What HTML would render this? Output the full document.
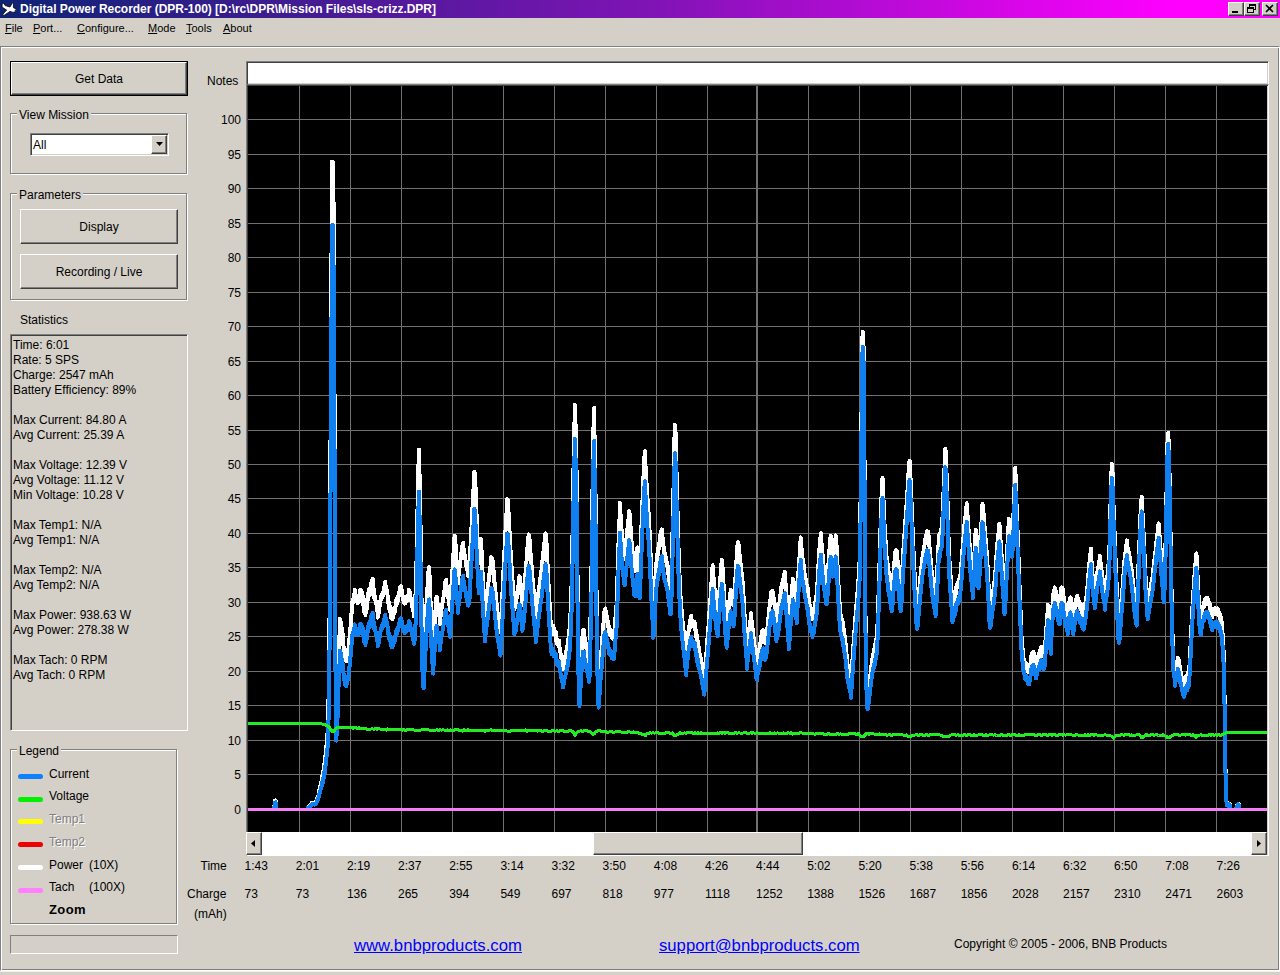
<!DOCTYPE html>
<html><head><meta charset="utf-8"><title>Digital Power Recorder (DPR-100)</title>
<style>
html,body{margin:0;padding:0}
body{width:1280px;height:975px;background:#d4d0c8;position:relative;overflow:hidden;font-family:"Liberation Sans",sans-serif;font-size:12px;color:#000}
div,span,a{position:absolute;white-space:nowrap;box-sizing:border-box}
#title{left:0;top:0;width:1280px;height:18px;background:linear-gradient(90deg,#0e2375 0,#7d14b4 50%,#ff00ff 92%,#ff00ff 100%)}
#ttext{left:20px;top:2px;font-weight:bold;font-size:12px;line-height:14px;color:#fff;letter-spacing:-0.03px}
.tb{top:2px;width:16px;height:14px;background:#d4d0c8;border:1px solid;border-color:#fff #404040 #404040 #fff;box-shadow:inset -1px -1px 0 #808080}
.mi{top:21px;font-size:11px;line-height:14px}
.mi u{text-decoration:underline}
#panel{left:0;top:46px;width:1280px;height:925px;border:1px solid;border-color:#808080 #fff #fff #808080;box-shadow:inset 1px 1px 0 #fff, inset -1px -1px 0 #808080, 0 1px 0 #f4f3f0}
.btn{background:#d4d0c8;border:1px solid;border-color:#fff #404040 #404040 #fff;box-shadow:inset -1px -1px 0 #808080;text-align:center;font-size:12px}
.grp{border:1px solid #808080;box-shadow:1px 1px 0 #fff, inset 1px 1px 0 #fff}
.gl{background:#d4d0c8;padding:0 2px;font-size:12px;line-height:14px}
.yl{left:200px;width:41px;text-align:right;font-size:12px;line-height:14px}
.xl{font-size:12px;line-height:14px}
.sl{left:13px;font-size:12px;line-height:14px}
.lg{left:49px;font-size:12px;line-height:14px}
.bar{left:18px;width:25px;height:5px;border-radius:2.5px}
.dis{color:#808080;text-shadow:1px 1px 0 #fff}
a.lk{color:#0000ff;text-decoration:underline;font-size:16.7px;line-height:20px}
</style></head><body>
<div id="title"></div>
<svg style="position:absolute;left:0px;top:0px" width="20" height="18" viewBox="0 0 20 18"><path d="M2.2 3.4L3.6 3.2L5.2 5.6L10 7L12.4 2.8L13.4 3L13.4 7.6L16 9Q17.4 10.4 16 11.6L13 12.4L10 11.4L4 15.4L2.6 14.6L6.6 10L3.4 8L2 7z" fill="#fff" stroke="#000" stroke-width="0.8"/><circle cx="15.3" cy="10.4" r="0.6" fill="#000"/></svg>
<div id="ttext">Digital Power Recorder (DPR-100) [D:\rc\DPR\Mission Files\sls-crizz.DPR]</div>
<div class="tb" style="left:1228px"><svg width="14" height="12" style="position:absolute;left:0;top:0"><rect x="3" y="8" width="6" height="2" fill="#000"/></svg></div>
<div class="tb" style="left:1244px"><svg width="14" height="12" style="position:absolute;left:0;top:0"><rect x="4.5" y="1.5" width="6" height="5" fill="none" stroke="#000"/><rect x="4" y="1" width="7" height="2" fill="#000"/><rect x="2.5" y="4.5" width="6" height="5" fill="#d4d0c8" stroke="#000"/><rect x="2" y="4" width="7" height="2" fill="#000"/></svg></div>
<div class="tb" style="left:1262px"><svg width="14" height="12" style="position:absolute;left:0;top:0"><path d="M3 2l7 7M10 2l-7 7" stroke="#000" stroke-width="1.6"/></svg></div>

<div class="mi" style="left:5px"><u>F</u>ile</div>
<div class="mi" style="left:33px"><u>P</u>ort...</div>
<div class="mi" style="left:77px"><u>C</u>onfigure...</div>
<div class="mi" style="left:148px"><u>M</u>ode</div>
<div class="mi" style="left:186px"><u>T</u>ools</div>
<div class="mi" style="left:223px"><u>A</u>bout</div>

<div id="panel"></div>

<div style="left:10px;top:61px;width:178px;height:35px;border:1px solid #000"></div>
<div class="btn" style="left:11px;top:62px;width:176px;height:33px;line-height:32px">Get Data</div>

<div class="grp" style="left:10px;top:113px;width:177px;height:61px"></div>
<div class="gl" style="left:17px;top:108px">View Mission</div>
<div style="left:30px;top:133px;width:139px;height:23px;background:#fff;border:1px solid;border-color:#808080 #fff #fff #808080;box-shadow:inset 1px 1px 0 #404040, inset -1px -1px 0 #d4d0c8"></div>
<div style="left:33px;top:138px;font-size:12px;line-height:14px">All</div>
<div class="btn" style="left:151px;top:135px;width:16px;height:19px"><svg width="14" height="16" style="position:absolute;left:0;top:0"><path d="M4 6h7l-3.5 4z" fill="#000"/></svg></div>

<div class="grp" style="left:10px;top:193px;width:177px;height:107px"></div>
<div class="gl" style="left:17px;top:188px">Parameters</div>
<div class="btn" style="left:20px;top:209px;width:158px;height:35px;line-height:34px">Display</div>
<div class="btn" style="left:20px;top:254px;width:158px;height:35px;line-height:34px">Recording / Live</div>

<div style="left:20px;top:313px;font-size:12px;line-height:14px">Statistics</div>
<div style="left:10px;top:334px;width:178px;height:397px;border:1px solid;border-color:#808080 #fff #fff #808080;box-shadow:inset 1px 1px 0 #404040"></div>
<div class="sl" style="top:338px">Time: 6:01</div>
<div class="sl" style="top:353px">Rate: 5 SPS</div>
<div class="sl" style="top:368px">Charge: 2547 mAh</div>
<div class="sl" style="top:383px">Battery Efficiency: 89%</div>
<div class="sl" style="top:413px">Max Current: 84.80 A</div>
<div class="sl" style="top:428px">Avg Current: 25.39 A</div>
<div class="sl" style="top:458px">Max Voltage: 12.39 V</div>
<div class="sl" style="top:473px">Avg Voltage: 11.12 V</div>
<div class="sl" style="top:488px">Min Voltage: 10.28 V</div>
<div class="sl" style="top:518px">Max Temp1: N/A</div>
<div class="sl" style="top:533px">Avg Temp1: N/A</div>
<div class="sl" style="top:563px">Max Temp2: N/A</div>
<div class="sl" style="top:578px">Avg Temp2: N/A</div>
<div class="sl" style="top:608px">Max Power: 938.63 W</div>
<div class="sl" style="top:623px">Avg Power: 278.38 W</div>
<div class="sl" style="top:653px">Max Tach: 0 RPM</div>
<div class="sl" style="top:668px">Avg Tach: 0 RPM</div>

<div class="grp" style="left:10px;top:749px;width:167px;height:175px"></div>
<div class="gl" style="left:17px;top:744px">Legend</div>
<div class="bar" style="top:774px;background:#0f80ff"></div><div class="lg" style="top:767px">Current</div>
<div class="bar" style="top:797px;background:#00f000"></div><div class="lg" style="top:789px">Voltage</div>
<div class="bar" style="top:819px;background:#ffff00"></div><div class="lg dis" style="top:812px">Temp1</div>
<div class="bar" style="top:842px;background:#ee0000"></div><div class="lg dis" style="top:835px">Temp2</div>
<div class="bar" style="top:865px;background:#ffffff"></div><div class="lg" style="top:858px">Power</div><div class="lg" style="left:89px;top:858px">(10X)</div>
<div class="bar" style="top:888px;background:#ff80ff"></div><div class="lg" style="top:880px">Tach</div><div class="lg" style="left:89px;top:880px">(100X)</div>
<div class="lg" style="top:903px;font-weight:bold;font-size:13px;letter-spacing:0.4px">Zoom</div>

<div style="left:10px;top:935px;width:168px;height:19px;border:1px solid;border-color:#808080 #fff #fff #808080"></div>

<div style="left:207px;top:74px;font-size:12px;line-height:14px">Notes</div>
<div style="left:246px;top:61px;width:1023px;height:24px;background:#fff;border:1px solid;border-color:#808080 #fff #fff #808080;box-shadow:inset 1px 1px 0 #404040, inset -1px -1px 0 #d4d0c8"></div>

<div style="left:246px;top:84px;width:1023px;height:772px;border:1px solid;border-color:#808080 #fff #fff #808080;box-shadow:inset 1px 1px 0 #404040"></div>
<svg id="chart" width="1019" height="746" viewBox="0 0 1019 746" style="position:absolute;left:248px;top:86px;background:#000;display:block">
<rect x="51" y="0" width="1" height="746" fill="#707070"/>
<rect x="102" y="0" width="1" height="746" fill="#707070"/>
<rect x="153" y="0" width="1" height="746" fill="#707070"/>
<rect x="204" y="0" width="1" height="746" fill="#707070"/>
<rect x="255" y="0" width="1" height="746" fill="#707070"/>
<rect x="306" y="0" width="1" height="746" fill="#707070"/>
<rect x="357" y="0" width="1" height="746" fill="#707070"/>
<rect x="408" y="0" width="1" height="746" fill="#707070"/>
<rect x="459" y="0" width="1" height="746" fill="#707070"/>
<rect x="508" y="0" width="2" height="746" fill="#707070"/>
<rect x="560" y="0" width="1" height="746" fill="#707070"/>
<rect x="611" y="0" width="1" height="746" fill="#707070"/>
<rect x="662" y="0" width="1" height="746" fill="#707070"/>
<rect x="713" y="0" width="1" height="746" fill="#707070"/>
<rect x="764" y="0" width="1" height="746" fill="#707070"/>
<rect x="815" y="0" width="1" height="746" fill="#707070"/>
<rect x="866" y="0" width="1" height="746" fill="#707070"/>
<rect x="917" y="0" width="1" height="746" fill="#707070"/>
<rect x="968" y="0" width="1" height="746" fill="#707070"/>
<rect x="0" y="723" width="1019" height="1" fill="#707070"/>
<rect x="0" y="688" width="1019" height="1" fill="#707070"/>
<rect x="0" y="654" width="1019" height="1" fill="#707070"/>
<rect x="0" y="619" width="1019" height="1" fill="#707070"/>
<rect x="0" y="585" width="1019" height="1" fill="#707070"/>
<rect x="0" y="550" width="1019" height="1" fill="#707070"/>
<rect x="0" y="516" width="1019" height="1" fill="#707070"/>
<rect x="0" y="481" width="1019" height="1" fill="#707070"/>
<rect x="0" y="447" width="1019" height="1" fill="#707070"/>
<rect x="0" y="412" width="1019" height="1" fill="#707070"/>
<rect x="0" y="378" width="1019" height="1" fill="#707070"/>
<rect x="0" y="344" width="1019" height="1" fill="#707070"/>
<rect x="0" y="309" width="1019" height="1" fill="#707070"/>
<rect x="0" y="275" width="1019" height="1" fill="#707070"/>
<rect x="0" y="240" width="1019" height="1" fill="#707070"/>
<rect x="0" y="206" width="1019" height="1" fill="#707070"/>
<rect x="0" y="171" width="1019" height="1" fill="#707070"/>
<rect x="0" y="137" width="1019" height="1" fill="#707070"/>
<rect x="0" y="102" width="1019" height="1" fill="#707070"/>
<rect x="0" y="68" width="1019" height="1" fill="#707070"/>
<rect x="0" y="33" width="1019" height="1" fill="#707070"/>
<defs><clipPath id="cl"><rect x="0" y="0" width="1019" height="722"/></clipPath></defs>
<g fill="none" stroke-linejoin="round" stroke-linecap="round" stroke-width="3" shape-rendering="crispEdges">
<g clip-path="url(#cl)"><polyline stroke="#ffffff" stroke-width="4" points="0.0,727.0 0.6,727.0 1.1,727.0 1.7,727.0 2.3,727.0 2.8,727.0 3.4,727.0 4.0,727.0 4.5,727.0 5.1,727.0 5.6,727.0 6.2,727.0 6.8,727.0 7.3,727.0 7.9,727.0 8.5,727.0 9.0,727.0 9.6,727.0 10.2,727.0 10.7,727.0 11.3,727.0 11.9,727.0 12.4,727.0 13.0,727.0 13.5,727.0 14.1,727.0 14.7,727.0 15.2,727.0 15.8,727.0 16.4,727.0 16.9,727.0 17.5,727.0 18.1,727.0 18.6,727.0 19.2,727.0 19.8,727.0 20.3,727.0 20.9,727.0 21.5,727.0 22.0,727.0 22.6,727.0 23.1,727.0 23.7,727.0 24.3,727.0 24.8,727.0 25.4,727.0 26.0,727.0 26.5,719.1 27.1,714.7 27.7,714.5 28.2,719.5 28.8,727.0 29.4,727.0 29.9,727.0 30.5,727.0 31.0,727.0 31.6,727.0 32.2,727.0 32.7,727.0 33.3,727.0 33.9,727.0 34.4,727.0 35.0,727.0 35.6,727.0 36.1,727.0 36.7,727.0 37.3,727.0 37.8,727.0 38.4,727.0 39.0,727.0 39.5,727.0 40.1,727.0 40.6,727.0 41.2,727.0 41.8,727.0 42.3,727.0 42.9,727.0 43.5,727.0 44.0,727.0 44.6,727.0 45.2,727.0 45.7,727.0 46.3,727.0 46.9,727.0 47.4,727.0 48.0,727.0 48.6,727.0 49.1,727.0 49.7,727.0 50.2,727.0 50.8,727.0 51.4,727.0 51.9,727.0 52.5,727.0 53.1,727.0 53.6,727.0 54.2,727.0 54.8,727.0 55.3,727.0 55.9,727.0 56.5,727.0 57.0,727.0 57.6,727.0 58.1,727.0 58.7,727.0 59.3,727.0 59.8,721.6 60.4,720.7 61.0,720.5 61.5,719.6 62.1,719.4 62.7,718.3 63.2,718.2 63.8,716.9 64.4,717.5 64.9,716.6 65.5,717.1 66.1,716.6 66.6,717.2 67.2,716.3 67.7,716.8 68.3,715.1 68.9,714.0 69.4,711.5 70.0,711.4 70.6,708.2 71.1,707.4 71.7,702.0 72.3,701.8 72.8,696.9 73.4,696.3 74.0,690.2 74.5,691.7 75.1,685.5 75.6,684.6 76.2,677.8 76.8,678.7 77.3,669.7 77.9,667.8 78.5,658.8 79.0,657.4 79.6,645.9 80.2,631.7 80.7,603.5 81.3,555.6 81.9,489.7 82.4,378.1 83.0,255.9 83.6,153.5 84.1,75.6 84.7,75.7 85.2,94.0 85.8,136.5 86.4,267.4 86.9,453.5 87.5,556.6 88.1,639.4 88.6,633.0 89.2,625.1 89.8,600.5 90.3,581.6 90.9,564.6 91.5,549.5 92.0,532.9 92.6,540.8 93.1,536.3 93.7,543.7 94.3,543.2 94.8,553.0 95.4,558.3 96.0,567.3 96.5,565.3 97.1,573.1 97.7,567.9 98.2,575.3 98.8,572.2 99.4,570.8 99.9,563.7 100.5,562.1 101.1,554.4 101.6,551.7 102.2,543.1 102.7,539.6 103.3,529.5 103.9,524.0 104.4,515.2 105.0,517.1 105.6,511.0 106.1,513.6 106.7,504.0 107.3,511.3 107.8,508.7 108.4,515.5 109.0,514.4 109.5,517.0 110.1,512.2 110.7,516.6 111.2,508.9 111.8,511.5 112.3,504.1 112.9,508.0 113.5,505.1 114.0,512.7 114.6,508.9 115.2,518.6 115.7,517.9 116.3,526.0 116.9,524.8 117.4,529.0 118.0,522.3 118.6,523.2 119.1,512.9 119.7,514.8 120.2,506.9 120.8,510.2 121.4,502.9 121.9,508.4 122.5,500.7 123.1,502.4 123.6,494.5 124.2,495.1 124.8,492.6 125.3,502.0 125.9,503.4 126.5,512.9 127.0,510.0 127.6,516.1 128.2,515.7 128.7,521.6 129.3,521.2 129.8,531.6 130.4,524.9 131.0,526.9 131.5,518.3 132.1,520.0 132.7,511.0 133.2,513.8 133.8,508.2 134.4,511.6 134.9,506.4 135.5,508.4 136.1,500.8 136.6,504.2 137.2,495.6 137.7,502.0 138.3,500.6 138.9,507.7 139.4,506.9 140.0,516.9 140.6,515.5 141.1,522.8 141.7,520.0 142.3,526.6 142.8,525.7 143.4,532.4 144.0,530.8 144.5,533.1 145.1,523.3 145.7,528.2 146.2,522.0 146.8,526.2 147.3,520.5 147.9,519.7 148.5,513.7 149.0,517.6 149.6,510.6 150.2,514.2 150.7,506.7 151.3,509.5 151.9,501.3 152.4,505.2 153.0,500.3 153.6,507.4 154.1,504.2 154.7,513.0 155.2,512.2 155.8,515.9 156.4,510.6 156.9,517.7 157.5,510.7 158.1,515.5 158.6,510.7 159.2,514.5 159.8,509.5 160.3,512.7 160.9,504.0 161.5,510.3 162.0,506.2 162.6,512.2 163.2,512.5 163.7,518.8 164.3,519.1 164.8,524.5 165.4,523.0 166.0,530.3 166.5,527.2 167.1,519.6 167.7,503.4 168.2,488.4 168.8,463.3 169.4,430.6 169.9,397.8 170.5,378.7 171.1,363.4 171.6,393.5 172.2,421.4 172.8,455.6 173.3,497.1 173.9,539.7 174.4,559.3 175.0,574.5 175.6,581.2 176.1,572.0 176.7,556.5 177.3,544.6 177.8,529.9 178.4,520.0 179.0,509.1 179.5,501.3 180.1,489.9 180.7,483.5 181.2,481.1 181.8,496.8 182.3,510.1 182.9,525.3 183.5,535.1 184.0,546.6 184.6,554.9 185.2,564.7 185.7,550.8 186.3,543.7 186.9,533.0 187.4,525.9 188.0,515.3 188.6,510.7 189.1,511.6 189.7,518.9 190.3,520.3 190.8,528.4 191.4,529.3 191.9,538.4 192.5,529.0 193.1,529.9 193.6,520.7 194.2,521.2 194.8,513.2 195.3,513.7 195.9,505.3 196.5,504.0 197.0,496.5 197.6,498.9 198.2,493.7 198.7,502.6 199.3,502.6 199.8,511.1 200.4,512.0 201.0,518.7 201.5,518.9 202.1,524.1 202.7,511.6 203.2,503.9 203.8,492.6 204.4,485.7 204.9,474.1 205.5,467.2 206.1,456.3 206.6,449.6 207.2,452.8 207.8,463.2 208.3,469.9 208.9,479.9 209.4,486.0 210.0,497.4 210.6,488.6 211.1,487.0 211.7,479.3 212.3,478.3 212.8,469.5 213.4,468.0 214.0,460.3 214.5,459.5 215.1,456.7 215.7,464.5 216.2,463.6 216.8,471.9 217.3,471.0 217.9,479.6 218.5,477.0 219.0,483.9 219.6,481.2 220.2,489.9 220.7,488.5 221.3,487.3 221.9,473.2 222.4,462.8 223.0,449.4 223.6,439.5 224.1,428.2 224.7,418.6 225.3,407.0 225.8,398.2 226.4,385.5 226.9,388.1 227.5,401.2 228.1,416.8 228.6,430.7 229.2,445.4 229.8,455.1 230.3,467.5 230.9,476.7 231.5,475.6 232.0,464.7 232.6,460.7 233.2,453.3 233.7,469.5 234.3,479.9 234.8,492.6 235.4,501.2 236.0,512.0 236.5,520.0 237.1,529.8 237.7,519.1 238.2,519.2 238.8,509.3 239.4,508.4 239.9,498.5 240.5,496.4 241.1,488.4 241.6,488.6 242.2,481.5 242.8,479.7 243.3,471.1 243.9,472.1 244.4,472.4 245.0,481.6 245.6,484.5 246.1,494.1 246.7,497.8 247.3,505.1 247.8,508.4 248.4,517.0 249.0,518.4 249.5,526.2 250.1,527.0 250.7,534.9 251.2,534.0 251.8,543.1 252.4,546.1 252.9,541.6 253.5,528.1 254.0,516.9 254.6,503.7 255.2,492.4 255.7,479.0 256.3,468.9 256.9,455.8 257.4,446.3 258.0,434.6 258.6,425.7 259.1,413.2 259.7,413.5 260.3,421.0 260.8,433.0 261.4,442.4 261.9,454.7 262.5,464.3 263.1,476.2 263.6,481.4 264.2,491.3 264.8,497.4 265.3,506.5 265.9,512.8 266.5,523.1 267.0,517.8 267.6,520.5 268.2,512.4 268.7,512.2 269.3,506.3 269.9,504.3 270.4,499.5 271.0,499.0 271.5,490.2 272.1,495.0 272.7,497.8 273.2,508.0 273.8,510.2 274.4,519.3 274.9,516.1 275.5,511.0 276.1,502.6 276.6,498.9 277.2,489.3 277.8,485.9 278.3,476.4 278.9,472.1 279.4,461.7 280.0,458.2 280.6,448.4 281.1,450.2 281.7,454.6 282.3,465.0 282.8,469.2 283.4,478.2 284.0,483.1 284.5,492.2 285.1,496.4 285.7,506.0 286.2,509.7 286.8,518.1 287.4,522.5 287.9,532.3 288.5,526.3 289.0,524.2 289.6,514.6 290.2,513.0 290.7,502.9 291.3,502.9 291.9,493.2 292.4,492.0 293.0,485.6 293.6,483.5 294.1,476.0 294.7,473.7 295.3,465.2 295.8,465.6 296.4,456.2 296.9,455.6 297.5,447.5 298.1,450.6 298.6,459.2 299.2,472.1 299.8,482.4 300.3,494.8 300.9,505.0 301.5,516.2 302.0,524.5 302.6,535.7 303.2,541.1 303.7,545.9 304.3,540.8 304.9,546.3 305.4,539.6 306.0,548.1 306.5,543.9 307.1,548.4 307.7,545.6 308.2,555.0 308.8,552.7 309.4,558.6 309.9,554.6 310.5,556.8 311.1,554.5 311.6,562.9 312.2,562.4 312.8,571.9 313.3,570.4 313.9,576.3 314.5,577.9 315.0,583.3 315.6,577.8 316.1,579.1 316.7,570.7 317.3,571.8 317.8,565.7 318.4,566.0 319.0,560.2 319.5,560.1 320.1,553.5 320.7,551.9 321.2,544.3 321.8,542.5 322.4,530.0 322.9,516.2 323.5,500.8 324.0,484.0 324.6,443.4 325.2,403.9 325.7,370.3 326.3,345.2 326.9,318.9 327.4,333.6 328.0,358.6 328.6,388.3 329.1,447.5 329.7,508.4 330.3,556.6 330.8,589.4 331.4,604.3 332.0,597.2 332.5,584.2 333.1,574.7 333.6,563.6 334.2,555.8 334.8,544.3 335.3,546.4 335.9,543.7 336.5,552.0 337.0,552.4 337.6,557.6 338.2,557.8 338.7,566.3 339.3,565.6 339.9,571.7 340.4,569.4 341.0,577.5 341.5,572.9 342.1,548.5 342.7,523.5 343.2,499.1 343.8,461.6 344.4,414.0 344.9,367.0 345.5,341.0 346.1,322.0 346.6,354.8 347.2,386.0 347.8,428.5 348.3,484.5 348.9,541.9 349.5,570.6 350.0,592.9 350.6,606.8 351.1,600.5 351.7,589.2 352.3,580.7 352.8,569.8 353.4,565.8 354.0,555.8 354.5,550.6 355.1,541.2 355.7,535.7 356.2,526.3 356.8,524.2 357.4,522.4 357.9,531.1 358.5,529.1 359.0,534.9 359.6,534.3 360.2,540.8 360.7,540.3 361.3,548.0 361.9,544.8 362.4,548.4 363.0,543.9 363.6,551.8 364.1,547.4 364.7,551.7 365.3,546.5 365.8,553.0 366.4,545.5 367.0,540.8 367.5,530.7 368.1,525.9 368.6,517.5 369.2,500.6 369.8,481.1 370.3,462.5 370.9,446.7 371.5,433.3 372.0,417.0 372.6,429.5 373.2,436.2 373.7,447.5 374.3,452.4 374.9,460.3 375.4,463.2 376.0,470.8 376.6,472.9 377.1,471.0 377.7,461.2 378.2,457.5 378.8,447.8 379.4,444.1 379.9,436.3 380.5,433.5 381.1,425.3 381.6,428.2 382.2,434.1 382.8,444.8 383.3,451.3 383.9,461.8 384.5,465.0 385.0,472.7 385.6,475.1 386.1,483.3 386.7,483.4 387.3,485.3 387.8,477.7 388.4,474.1 389.0,465.1 389.5,461.4 390.1,469.2 390.7,480.6 391.2,486.2 391.8,487.2 392.4,470.4 392.9,455.9 393.5,439.4 394.1,425.3 394.6,411.3 395.2,398.8 395.7,385.2 396.3,373.5 396.9,365.2 397.4,378.3 398.0,386.7 398.6,398.4 399.1,407.0 399.7,416.4 400.3,422.5 400.8,431.5 401.4,441.6 402.0,455.3 402.5,466.8 403.1,480.7 403.6,492.1 404.2,505.4 404.8,517.0 405.3,530.5 405.9,523.0 406.5,512.2 407.0,498.8 407.6,490.7 408.2,480.5 408.7,473.9 409.3,467.8 409.9,468.8 410.4,461.5 411.0,462.9 411.6,455.0 412.1,454.7 412.7,445.4 413.2,446.8 413.8,443.4 414.4,451.1 414.9,453.4 415.5,461.2 416.1,461.4 416.6,470.0 417.2,467.7 417.8,475.1 418.3,472.0 418.9,479.3 419.5,479.2 420.0,487.8 420.6,488.7 421.1,496.2 421.7,497.8 422.3,505.0 422.8,505.4 423.4,491.6 424.0,468.2 424.5,445.7 425.1,421.7 425.7,393.8 426.2,365.6 426.8,338.5 427.4,341.5 427.9,364.1 428.5,385.9 429.1,408.5 429.6,428.6 430.2,449.6 430.7,469.7 431.3,486.1 431.9,495.8 432.4,508.6 433.0,515.9 433.6,524.7 434.1,529.2 434.7,537.7 435.3,540.1 435.8,548.9 436.4,551.3 437.0,560.3 437.5,563.9 438.1,572.1 438.6,562.9 439.2,559.0 439.8,550.9 440.3,548.2 440.9,540.8 441.5,542.8 442.0,534.2 442.6,536.6 443.2,529.8 443.7,537.2 444.3,534.3 444.9,539.8 445.4,535.9 446.0,539.6 446.6,536.1 447.1,544.2 447.7,543.7 448.2,551.4 448.8,549.0 449.4,557.9 449.9,554.8 450.5,562.9 451.1,561.7 451.6,567.6 452.2,568.1 452.8,574.1 453.3,572.8 453.9,581.0 454.5,579.1 455.0,586.8 455.6,584.0 456.2,593.6 456.7,588.5 457.3,582.7 457.8,572.6 458.4,567.6 459.0,558.6 459.5,552.7 460.1,543.8 460.7,538.2 461.2,527.7 461.8,523.2 462.4,513.0 462.9,507.4 463.5,496.6 464.1,491.3 464.6,479.2 465.2,488.5 465.7,492.4 466.3,501.1 466.9,504.5 467.4,513.2 468.0,515.8 468.6,523.9 469.1,525.9 469.7,529.8 470.3,519.3 470.8,514.7 471.4,505.1 472.0,499.6 472.5,489.6 473.1,485.5 473.7,474.0 474.2,477.7 474.8,484.9 475.3,495.8 475.9,503.4 476.5,513.9 477.0,520.1 477.6,530.2 478.2,537.4 478.7,542.9 479.3,534.9 479.9,532.4 480.4,523.2 481.0,520.7 481.6,512.7 482.1,510.8 482.7,503.5 483.2,507.3 483.8,505.7 484.4,512.5 484.9,512.8 485.5,519.4 486.1,515.6 486.6,508.2 487.2,496.1 487.8,486.4 488.3,476.3 488.9,470.1 489.5,459.5 490.0,456.1 490.6,458.2 491.2,466.2 491.7,468.7 492.3,478.3 492.8,477.6 493.4,485.3 494.0,487.9 494.5,495.0 495.1,502.3 495.7,513.6 496.2,521.8 496.8,532.7 497.4,539.3 497.9,549.2 498.5,554.4 499.1,566.3 499.6,556.3 500.2,555.2 500.7,547.7 501.3,545.2 501.9,537.9 502.4,536.0 503.0,527.3 503.6,535.3 504.1,536.7 504.7,544.4 505.3,547.1 505.8,556.5 506.4,557.6 507.0,565.7 507.5,566.8 508.1,576.3 508.7,577.6 509.2,578.6 509.8,568.9 510.3,571.2 510.9,563.8 511.5,564.4 512.0,557.1 512.6,557.5 513.2,550.4 513.7,552.4 514.3,545.0 514.9,549.0 515.4,544.2 516.0,551.8 516.6,549.1 517.1,556.7 517.7,553.3 518.3,554.0 518.8,545.8 519.4,542.9 519.9,534.1 520.5,531.6 521.1,522.5 521.6,520.7 522.2,513.9 522.8,513.5 523.3,506.0 523.9,506.0 524.5,504.6 525.0,511.2 525.6,511.7 526.2,518.3 526.7,517.9 527.3,526.1 527.8,528.7 528.4,536.6 529.0,531.8 529.5,532.0 530.1,525.0 530.7,524.7 531.2,516.9 531.8,516.5 532.4,508.7 532.9,507.3 533.5,499.9 534.1,502.0 534.6,495.1 535.2,496.7 535.8,488.5 536.3,489.2 536.9,486.0 537.4,496.1 538.0,500.7 538.6,510.1 539.1,515.9 539.7,525.6 540.3,532.7 540.8,545.9 541.4,537.4 542.0,531.4 542.5,520.5 543.1,514.9 543.7,506.1 544.2,502.7 544.8,493.0 545.3,497.0 545.9,496.6 546.5,504.1 547.0,505.1 547.6,512.4 548.2,510.0 548.7,518.2 549.3,505.2 549.9,497.5 550.4,487.3 551.0,478.6 551.6,469.5 552.1,463.6 552.7,451.4 553.3,461.3 553.8,464.0 554.4,472.6 554.9,473.7 555.5,480.0 556.1,479.5 556.6,488.2 557.2,488.7 557.8,495.3 558.3,495.6 558.9,502.4 559.5,501.3 560.0,510.7 560.6,511.7 561.2,518.9 561.7,519.1 562.3,525.6 562.8,522.0 563.4,528.1 564.0,527.3 564.5,532.9 565.1,529.3 565.7,529.7 566.2,522.0 566.8,521.8 567.4,515.3 567.9,515.3 568.5,509.2 569.1,507.1 569.6,494.1 570.2,484.6 570.8,472.2 571.3,465.5 571.9,456.1 572.4,451.8 573.0,447.2 573.6,458.5 574.1,462.5 574.7,470.6 575.3,475.4 575.8,482.9 576.4,482.9 577.0,491.4 577.5,491.5 578.1,498.6 578.7,498.3 579.2,495.7 579.8,485.6 580.4,479.2 580.9,468.4 581.5,462.8 582.0,453.9 582.6,450.2 583.2,450.3 583.7,458.4 584.3,461.5 584.9,470.4 585.4,463.6 586.0,462.4 586.6,456.2 587.1,456.9 587.7,449.3 588.3,454.8 588.8,464.3 589.4,476.9 589.9,487.8 590.5,498.8 591.1,507.2 591.6,518.4 592.2,524.4 592.8,532.0 593.3,530.3 593.9,536.3 594.5,534.6 595.0,542.6 595.6,542.8 596.2,549.3 596.7,550.3 597.3,556.6 597.9,558.2 598.4,567.5 599.0,570.8 599.5,578.4 600.1,579.0 600.7,587.2 601.2,586.8 601.8,592.8 602.4,592.5 602.9,599.2 603.5,589.3 604.1,582.5 604.6,571.2 605.2,564.4 605.8,553.3 606.3,547.1 606.9,537.5 607.4,531.9 608.0,521.9 608.6,517.5 609.1,508.7 609.7,504.7 610.3,496.3 610.8,489.4 611.4,477.5 612.0,468.0 612.5,417.1 613.1,364.1 613.7,308.8 614.2,255.1 614.8,245.8 615.4,247.9 615.9,299.2 616.5,371.0 617.0,461.5 617.6,543.0 618.2,571.9 618.7,601.7 619.3,610.8 619.9,612.0 620.4,604.8 621.0,604.5 621.6,596.6 622.1,593.0 622.7,585.1 623.3,583.2 623.8,574.8 624.4,573.3 624.9,568.2 625.5,569.0 626.1,563.4 626.6,564.4 627.2,557.6 627.8,558.1 628.3,552.6 628.9,552.5 629.5,537.8 630.0,522.7 630.6,506.3 631.2,490.0 631.7,469.1 632.3,449.1 632.9,428.6 633.4,414.3 634.0,399.8 634.5,391.7 635.1,403.5 635.7,418.7 636.2,432.2 636.8,444.2 637.4,452.0 637.9,462.5 638.5,470.0 639.1,477.0 639.6,477.9 640.2,485.9 640.8,486.2 641.3,492.3 641.9,493.0 642.4,500.1 643.0,499.7 643.6,507.6 644.1,505.0 644.7,499.3 645.3,489.2 645.8,483.7 646.4,475.8 647.0,472.4 647.5,464.7 648.1,464.2 648.7,464.9 649.2,473.5 649.8,475.9 650.4,485.9 650.9,488.6 651.5,496.6 652.0,498.2 652.6,507.7 653.2,502.9 653.7,494.9 654.3,482.7 654.9,473.2 655.4,463.0 656.0,456.3 656.6,447.1 657.1,440.0 657.7,430.2 658.3,423.2 658.8,413.3 659.4,406.3 660.0,395.4 660.5,387.0 661.1,375.9 661.6,374.8 662.2,385.3 662.8,398.9 663.3,410.6 663.9,425.8 664.5,440.1 665.0,456.0 665.6,466.6 666.2,479.1 666.7,490.1 667.3,502.3 667.9,509.2 668.4,520.5 669.0,526.1 669.5,524.2 670.1,516.3 670.7,512.0 671.2,502.7 671.8,499.6 672.4,491.1 672.9,487.7 673.5,479.8 674.1,477.3 674.6,469.5 675.2,469.0 675.8,461.1 676.3,461.9 676.9,453.2 677.5,455.7 678.0,449.0 678.6,451.6 679.1,445.1 679.7,448.0 680.3,445.6 680.8,455.3 681.4,459.3 682.0,467.8 682.5,471.9 683.1,481.1 683.7,485.7 684.2,492.8 684.8,492.3 685.4,500.4 685.9,497.2 686.5,505.4 687.0,504.1 687.6,513.3 688.2,505.6 688.7,496.0 689.3,483.2 689.9,472.9 690.4,460.7 691.0,451.6 691.6,447.4 692.1,452.4 692.7,443.5 693.3,445.2 693.8,441.2 694.4,433.5 695.0,419.2 695.5,406.9 696.1,392.8 696.6,379.4 697.2,363.0 697.8,365.7 698.3,381.1 698.9,398.0 699.5,414.3 700.0,434.3 700.6,454.3 701.2,471.5 701.7,476.8 702.3,487.2 702.9,492.9 703.4,502.4 704.0,509.2 704.5,519.9 705.1,513.3 705.7,515.4 706.2,509.1 706.8,512.5 707.4,505.8 707.9,508.1 708.5,500.5 709.1,501.9 709.6,496.5 710.2,500.7 710.8,494.1 711.3,498.5 711.9,492.8 712.5,488.5 713.0,479.3 713.6,475.6 714.1,466.6 714.7,461.5 715.3,453.1 715.8,448.0 716.4,438.8 717.0,436.9 717.5,429.8 718.1,425.9 718.7,417.2 719.2,426.8 719.8,431.8 720.4,441.5 720.9,447.4 721.5,456.7 722.1,462.1 722.6,470.1 723.2,473.8 723.7,481.9 724.3,485.7 724.9,495.3 725.4,485.0 726.0,476.2 726.6,464.7 727.1,455.6 727.7,443.8 728.3,445.9 728.8,453.4 729.4,464.7 730.0,473.1 730.5,485.0 731.1,478.5 731.6,470.8 732.2,459.5 732.8,451.0 733.3,439.5 733.9,430.5 734.5,418.1 735.0,421.0 735.6,427.7 736.2,438.0 736.7,441.8 737.3,451.2 737.9,454.1 738.4,462.4 739.0,469.2 739.6,480.9 740.1,489.6 740.7,502.1 741.2,512.4 741.8,526.4 742.4,524.7 742.9,524.3 743.5,515.6 744.1,515.5 744.6,507.3 745.2,506.9 745.8,499.5 746.3,497.4 746.9,489.9 747.5,484.1 748.0,474.1 748.6,467.9 749.1,458.9 749.7,455.4 750.3,447.8 750.8,445.6 751.4,437.9 752.0,446.0 752.5,453.6 753.1,463.4 753.7,470.5 754.2,479.8 754.8,485.9 755.4,495.3 755.9,501.6 756.5,512.1 757.1,507.1 757.6,497.0 758.2,484.0 758.7,473.2 759.3,461.3 759.9,453.1 760.4,441.6 761.0,432.9 761.6,435.9 762.1,443.9 762.7,445.4 763.3,452.3 763.8,453.5 764.4,449.7 765.0,437.3 765.5,426.8 766.1,413.9 766.6,398.5 767.2,381.9 767.8,394.6 768.3,411.4 768.9,429.4 769.5,443.8 770.0,459.1 770.6,473.1 771.2,489.3 771.7,503.9 772.3,519.5 772.9,533.2 773.4,549.0 774.0,554.4 774.6,563.4 775.1,567.4 775.7,575.2 776.2,573.0 776.8,580.0 777.4,578.3 777.9,581.3 778.5,577.2 779.1,583.3 779.6,579.3 780.2,586.4 780.8,584.2 781.3,586.3 781.9,578.9 782.5,578.4 783.0,570.9 783.6,572.7 784.2,567.4 784.7,570.3 785.3,565.6 785.8,571.8 786.4,567.7 787.0,576.2 787.5,572.5 788.1,580.4 788.7,575.7 789.2,576.5 789.8,571.3 790.4,572.1 790.9,567.9 791.5,571.9 792.1,564.1 792.6,565.3 793.2,560.8 793.7,567.8 794.3,564.5 794.9,570.0 795.4,565.4 796.0,570.1 796.6,567.5 797.1,561.2 797.7,551.2 798.3,544.0 798.8,534.1 799.4,529.0 800.0,519.0 800.5,529.1 801.1,532.9 801.7,542.1 802.2,545.7 802.8,554.5 803.3,539.6 803.9,530.7 804.5,518.9 805.0,515.1 805.6,506.0 806.2,504.8 806.7,501.5 807.3,506.2 807.9,505.5 808.4,511.8 809.0,509.6 809.6,516.7 810.1,516.2 810.7,523.3 811.2,523.6 811.8,523.4 812.4,514.1 812.9,511.3 813.5,501.5 814.1,501.9 814.6,502.3 815.2,510.6 815.8,510.5 816.3,517.8 816.9,518.0 817.5,524.2 818.0,523.0 818.6,528.5 819.2,527.7 819.7,533.9 820.3,525.4 820.8,524.7 821.4,515.4 822.0,513.8 822.5,511.4 823.1,519.4 823.7,520.3 824.2,529.1 824.8,530.4 825.4,534.3 825.9,524.9 826.5,524.5 827.1,517.0 827.6,518.6 828.2,513.2 828.7,515.8 829.3,509.9 829.9,516.0 830.4,512.8 831.0,519.4 831.6,516.7 832.1,523.0 832.7,517.5 833.3,524.1 833.8,519.9 834.4,527.8 835.0,523.0 835.5,529.7 836.1,522.1 836.7,523.5 837.2,517.3 837.8,517.0 838.3,510.7 838.9,509.2 839.5,500.0 840.0,494.6 840.6,486.4 841.2,481.3 841.7,473.0 842.3,469.5 842.9,462.6 843.4,474.1 844.0,479.5 844.6,489.3 845.1,491.2 845.7,498.5 846.2,501.5 846.8,507.4 847.4,499.9 847.9,500.5 848.5,492.5 849.1,492.3 849.6,483.5 850.2,482.8 850.8,477.7 851.3,476.6 851.9,470.0 852.5,477.1 853.0,477.0 853.6,485.8 854.2,486.7 854.7,495.1 855.3,495.0 855.8,501.8 856.4,501.6 857.0,509.4 857.5,502.1 858.1,501.3 858.7,493.3 859.2,492.1 859.8,486.8 860.4,481.4 860.9,469.1 861.5,459.2 862.1,436.3 862.6,414.2 863.2,393.5 863.8,377.5 864.3,379.1 864.9,398.3 865.4,416.5 866.0,432.4 866.6,447.0 867.1,462.5 867.7,476.2 868.3,490.6 868.8,503.5 869.4,518.2 870.0,528.3 870.5,540.3 871.1,543.4 871.7,539.2 872.2,530.4 872.8,524.5 873.3,514.6 873.9,510.0 874.5,502.0 875.0,495.9 875.6,486.6 876.2,480.2 876.7,470.6 877.3,468.5 877.9,460.5 878.4,458.4 879.0,454.4 879.6,461.6 880.1,462.1 880.7,469.3 881.3,467.0 881.8,474.0 882.4,474.9 882.9,482.8 883.5,483.4 884.1,491.7 884.6,492.8 885.2,501.4 885.8,502.4 886.3,510.9 886.9,511.6 887.5,519.5 888.0,520.6 888.6,526.2 889.2,511.0 889.7,498.0 890.3,484.0 890.8,471.1 891.4,456.2 892.0,443.0 892.5,428.5 893.1,418.6 893.7,411.1 894.2,422.9 894.8,431.7 895.4,443.2 895.9,453.9 896.5,467.7 897.1,479.4 897.6,492.0 898.2,499.0 898.8,508.7 899.3,515.6 899.9,519.8 900.4,512.3 901.0,513.4 901.6,505.2 902.1,506.9 902.7,499.8 903.3,499.2 903.8,493.1 904.4,493.0 905.0,484.1 905.5,482.6 906.1,475.6 906.7,471.9 907.2,466.0 907.8,463.8 908.3,455.6 908.9,455.5 909.5,447.1 910.0,445.9 910.6,437.3 911.2,446.3 911.7,451.4 912.3,460.1 912.9,465.4 913.4,474.8 914.0,479.6 914.6,488.1 915.1,492.8 915.7,502.9 916.3,496.6 916.8,480.8 917.4,463.2 917.9,436.3 918.5,406.6 919.1,378.0 919.6,352.5 920.2,346.8 920.8,359.3 921.3,376.5 921.9,407.0 922.5,444.2 923.0,481.1 923.6,506.3 924.2,531.2 924.7,557.0 925.3,570.9 925.9,579.0 926.4,579.5 927.0,589.5 927.5,582.2 928.1,584.0 928.7,577.0 929.2,578.1 929.8,571.7 930.4,576.0 930.9,574.6 931.5,580.3 932.1,580.6 932.6,588.2 933.2,586.5 933.8,594.2 934.3,591.7 934.9,598.5 935.4,596.6 936.0,601.2 936.6,596.3 937.1,597.8 937.7,590.7 938.3,594.6 938.8,589.4 939.4,593.9 940.0,586.3 940.5,590.5 941.1,584.4 941.7,576.3 942.2,565.2 942.8,555.4 943.4,541.6 943.9,530.2 944.5,519.9 945.0,512.9 945.6,502.4 946.2,495.7 946.7,485.7 947.3,480.4 947.9,470.9 948.4,467.4 949.0,478.0 949.6,491.2 950.1,501.7 950.7,513.0 951.3,522.0 951.8,533.6 952.4,533.9 952.9,536.1 953.5,528.7 954.1,528.4 954.6,522.1 955.2,522.0 955.8,516.8 956.3,520.8 956.9,513.5 957.5,517.3 958.0,512.3 958.6,516.0 959.2,511.8 959.7,518.2 960.3,513.8 960.9,518.6 961.4,516.3 962.0,523.4 962.5,520.8 963.1,527.7 963.7,524.6 964.2,531.4 964.8,522.7 965.4,527.9 965.9,523.5 966.5,527.6 967.1,522.0 967.6,527.7 968.2,522.5 968.8,528.5 969.3,522.3 969.9,526.3 970.4,523.9 971.0,529.3 971.6,526.9 972.1,532.5 972.7,531.0 973.3,537.1 973.8,536.1 974.4,545.5 975.0,552.2 975.5,563.4 976.1,586.9 976.7,617.8 977.2,666.5 977.8,699.0 978.4,714.3 978.9,719.1 979.5,719.2 980.0,719.7 980.6,718.3 981.2,718.0 981.7,717.9 982.3,720.2 982.9,727.0 983.4,727.0 984.0,727.0 984.6,727.0 985.1,727.0 985.7,727.0 986.3,727.0 986.8,727.0 987.4,727.0 988.0,727.0 988.5,721.1 989.1,720.0 989.6,718.6 990.2,717.7 990.8,718.2 991.3,720.5 991.9,727.0 992.5,727.0 993.0,727.0 993.6,727.0 994.2,727.0 994.7,727.0 995.3,727.0 995.9,727.0 996.4,727.0 997.0,727.0 997.5,727.0 998.1,727.0 998.7,727.0 999.2,727.0 999.8,727.0 1000.4,727.0 1000.9,727.0 1001.5,727.0 1002.1,727.0 1002.6,727.0 1003.2,727.0 1003.8,727.0 1004.3,727.0 1004.9,727.0 1005.5,727.0 1006.0,727.0 1006.6,727.0 1007.1,727.0 1007.7,727.0 1008.3,727.0 1008.8,727.0 1009.4,727.0 1010.0,727.0 1010.5,727.0 1011.1,727.0 1011.7,727.0 1012.2,727.0 1012.8,727.0 1013.4,727.0 1013.9,727.0 1014.5,727.0 1015.0,727.0 1015.6,727.0 1016.2,727.0 1016.7,727.0 1017.3,727.0 1017.9,727.0 1018.4,727.0 1019.0,727.0"/>
<polyline stroke="#1080f0" stroke-width="4" points="0.0,727.0 0.6,727.0 1.1,727.0 1.7,727.0 2.3,727.0 2.8,727.0 3.4,727.0 4.0,727.0 4.5,727.0 5.1,727.0 5.6,727.0 6.2,727.0 6.8,727.0 7.3,727.0 7.9,727.0 8.5,727.0 9.0,727.0 9.6,727.0 10.2,727.0 10.7,727.0 11.3,727.0 11.9,727.0 12.4,727.0 13.0,727.0 13.5,727.0 14.1,727.0 14.7,727.0 15.2,727.0 15.8,727.0 16.4,727.0 16.9,727.0 17.5,727.0 18.1,727.0 18.6,727.0 19.2,727.0 19.8,727.0 20.3,727.0 20.9,727.0 21.5,727.0 22.0,727.0 22.6,727.0 23.1,727.0 23.7,727.0 24.3,727.0 24.8,727.0 25.4,727.0 26.0,727.0 26.5,719.9 27.1,716.4 27.7,716.3 28.2,720.3 28.8,727.0 29.4,727.0 29.9,727.0 30.5,727.0 31.0,727.0 31.6,727.0 32.2,727.0 32.7,727.0 33.3,727.0 33.9,727.0 34.4,727.0 35.0,727.0 35.6,727.0 36.1,727.0 36.7,727.0 37.3,727.0 37.8,727.0 38.4,727.0 39.0,727.0 39.5,727.0 40.1,727.0 40.6,727.0 41.2,727.0 41.8,727.0 42.3,727.0 42.9,727.0 43.5,727.0 44.0,727.0 44.6,727.0 45.2,727.0 45.7,727.0 46.3,727.0 46.9,727.0 47.4,727.0 48.0,727.0 48.6,727.0 49.1,727.0 49.7,727.0 50.2,727.0 50.8,727.0 51.4,727.0 51.9,727.0 52.5,727.0 53.1,727.0 53.6,727.0 54.2,727.0 54.8,727.0 55.3,727.0 55.9,727.0 56.5,727.0 57.0,727.0 57.6,727.0 58.1,727.0 58.7,727.0 59.3,727.0 59.8,721.9 60.4,721.3 61.0,721.1 61.5,720.4 62.1,720.2 62.7,719.3 63.2,719.2 63.8,718.1 64.4,718.7 64.9,717.9 65.5,718.4 66.1,718.0 66.6,718.5 67.2,717.7 67.7,718.1 68.3,716.7 68.9,715.8 69.4,713.8 70.0,713.8 70.6,711.2 71.1,710.5 71.7,706.1 72.3,705.9 72.8,701.9 73.4,701.5 74.0,696.5 74.5,697.7 75.1,692.7 75.6,692.0 76.2,686.4 76.8,687.2 77.3,679.8 77.9,678.2 78.5,670.9 79.0,669.7 79.6,660.2 80.2,648.4 80.7,625.0 81.3,584.6 81.9,528.1 82.4,429.3 83.0,316.4 83.6,217.3 84.1,138.9 84.7,138.8 85.2,157.3 85.8,199.8 86.4,326.5 86.9,495.9 87.5,585.1 88.1,654.7 88.6,649.4 89.2,642.7 89.8,622.1 90.3,606.1 90.9,591.7 91.5,578.8 92.0,564.5 92.6,571.1 93.1,567.4 93.7,573.6 94.3,573.3 94.8,581.5 95.4,586.1 96.0,593.6 96.5,592.0 97.1,598.5 97.7,594.1 98.2,600.3 98.8,597.7 99.4,596.4 99.9,590.4 100.5,588.9 101.1,582.4 101.6,579.9 102.2,572.5 102.7,569.3 103.3,560.6 103.9,555.9 104.4,548.3 105.0,549.7 105.6,544.4 106.1,546.5 106.7,538.3 107.3,544.5 107.8,542.3 108.4,548.0 109.0,547.1 109.5,549.2 110.1,545.1 110.7,548.7 111.2,542.1 111.8,544.2 112.3,537.8 112.9,541.1 113.5,538.6 114.0,545.0 114.6,541.8 115.2,550.1 115.7,549.6 116.3,556.5 116.9,555.5 117.4,559.0 118.0,553.2 118.6,553.8 119.1,545.0 119.7,546.4 120.2,539.6 120.8,542.3 121.4,536.0 121.9,540.5 122.5,533.9 123.1,535.2 123.6,528.4 124.2,528.7 124.8,526.6 125.3,534.7 125.9,535.9 126.5,544.1 127.0,541.8 127.6,547.0 128.2,546.7 128.7,551.9 129.3,551.6 129.8,560.5 130.4,554.8 131.0,556.4 131.5,548.9 132.1,550.2 132.7,542.5 133.2,544.8 133.8,539.9 134.4,542.7 134.9,538.1 135.5,539.8 136.1,533.2 136.6,536.0 137.2,528.6 137.7,534.1 138.3,533.0 138.9,539.2 139.4,538.6 140.0,547.2 140.6,546.1 141.1,552.4 141.7,550.0 142.3,555.7 142.8,555.0 143.4,560.8 144.0,559.4 144.5,561.4 145.1,552.9 145.7,557.0 146.2,551.6 146.8,555.1 147.3,550.1 147.9,549.4 148.5,544.2 149.0,547.4 149.6,541.3 150.2,544.4 150.7,537.9 151.3,540.2 151.9,533.1 152.4,536.4 153.0,532.1 153.6,538.3 154.1,535.5 154.7,543.1 155.2,542.4 155.8,545.6 156.4,541.1 156.9,547.2 157.5,541.1 158.1,545.2 158.6,541.0 159.2,544.2 159.8,539.9 160.3,542.5 160.9,535.1 161.5,540.5 162.0,537.0 162.6,542.2 163.2,542.5 163.7,548.0 164.3,548.2 164.8,552.9 165.4,551.7 166.0,558.0 166.5,555.4 167.1,548.5 167.7,534.1 168.2,520.6 168.8,498.0 169.4,468.1 169.9,437.7 170.5,419.9 171.1,405.6 171.6,433.6 172.2,459.4 172.8,490.7 173.3,528.2 173.9,566.0 174.4,583.3 175.0,596.6 175.6,602.4 176.1,594.3 176.7,580.8 177.3,570.2 177.8,557.3 178.4,548.4 179.0,538.7 179.5,531.6 180.1,521.5 180.7,515.5 181.2,513.4 181.8,527.4 182.3,539.4 182.9,552.9 183.5,561.6 184.0,571.7 184.6,579.1 185.2,587.6 185.7,575.5 186.3,569.1 186.9,559.7 187.4,553.3 188.0,543.9 188.6,539.6 189.1,540.5 189.7,546.9 190.3,548.2 190.8,555.3 191.4,556.2 191.9,564.1 192.5,555.9 193.1,556.5 193.6,548.5 194.2,548.8 194.8,541.7 195.3,542.0 195.9,534.6 196.5,533.4 197.0,526.7 197.6,528.6 198.2,524.0 198.7,531.9 199.3,531.9 199.8,539.4 200.4,540.3 201.0,546.2 201.5,546.4 202.1,551.0 202.7,539.8 203.2,532.9 203.8,522.7 204.4,516.4 204.9,505.9 205.5,499.6 206.1,489.6 206.6,483.3 207.2,486.4 207.8,495.8 208.3,501.9 208.9,511.0 209.4,516.6 210.0,526.7 210.6,518.9 211.1,517.3 211.7,510.4 212.3,509.4 212.8,501.5 213.4,500.0 214.0,493.0 214.5,492.1 215.1,489.7 215.7,496.7 216.2,496.0 216.8,503.4 217.3,502.8 217.9,510.4 218.5,508.2 219.0,514.3 219.6,512.0 220.2,519.6 220.7,518.5 221.3,517.3 221.9,504.5 222.4,494.9 223.0,482.6 223.6,473.4 224.1,462.9 224.7,453.9 225.3,443.1 225.8,434.7 226.4,422.8 226.9,425.1 227.5,437.5 228.1,452.1 228.6,465.1 229.2,478.6 229.8,487.6 230.3,499.0 230.9,507.4 231.5,506.3 232.0,496.5 232.6,492.6 233.2,486.0 233.7,500.6 234.3,510.2 234.8,521.7 235.4,529.5 236.0,539.3 236.5,546.5 237.1,555.3 237.7,545.8 238.2,545.6 238.8,536.9 239.4,535.9 239.9,527.1 240.5,525.0 241.1,517.9 241.6,517.8 242.2,511.5 242.8,509.8 243.3,502.1 243.9,502.7 244.4,503.1 245.0,511.4 245.6,514.2 246.1,522.7 246.7,526.2 247.3,532.8 247.8,535.8 248.4,543.4 249.0,544.8 249.5,551.7 250.1,552.5 250.7,559.5 251.2,558.9 251.8,566.9 252.4,569.6 252.9,565.4 253.5,553.4 254.0,543.2 254.6,531.2 255.2,520.9 255.7,508.7 256.3,499.3 256.9,487.3 257.4,478.4 258.0,467.5 258.6,459.2 259.1,447.5 259.7,447.5 260.3,454.7 260.8,465.9 261.4,474.7 261.9,486.0 262.5,494.9 263.1,505.9 263.6,510.6 264.2,519.6 264.8,525.2 265.3,533.4 265.9,539.2 266.5,548.4 267.0,543.8 267.6,546.0 268.2,538.9 268.7,538.5 269.3,533.2 269.9,531.3 270.4,527.0 271.0,526.4 271.5,518.5 272.1,522.7 272.7,525.3 273.2,534.5 273.8,536.6 274.4,544.8 274.9,542.0 275.5,537.3 276.1,529.7 276.6,526.1 277.2,517.4 277.8,514.1 278.3,505.5 278.9,501.5 279.4,492.0 280.0,488.6 280.6,479.7 281.1,481.1 281.7,485.3 282.3,494.8 282.8,498.8 283.4,507.0 284.0,511.6 284.5,519.8 285.1,523.7 285.7,532.4 286.2,535.9 286.8,543.4 287.4,547.5 287.9,556.2 288.5,550.8 289.0,548.8 289.6,540.2 290.2,538.7 290.7,529.6 291.3,529.4 291.9,520.7 292.4,519.4 293.0,513.6 293.6,511.5 294.1,504.7 294.7,502.4 295.3,494.7 295.8,494.8 296.4,486.3 296.9,485.6 297.5,478.1 298.1,480.8 298.6,488.9 299.2,500.8 299.8,510.4 300.3,521.8 300.9,531.1 301.5,541.3 302.0,548.8 302.6,558.9 303.2,563.8 303.7,568.1 304.3,563.6 304.9,568.4 305.4,562.6 306.0,570.1 306.5,566.4 307.1,570.3 307.7,568.0 308.2,576.2 308.8,574.2 309.4,579.4 309.9,575.9 310.5,577.9 311.1,575.9 311.6,583.3 312.2,582.9 312.8,591.3 313.3,590.0 313.9,595.2 314.5,596.6 315.0,601.5 315.6,596.6 316.1,597.7 316.7,590.2 317.3,591.2 317.8,585.8 318.4,585.9 319.0,580.8 319.5,580.6 320.1,574.7 320.7,573.2 321.2,566.4 321.8,564.6 322.4,553.4 322.9,540.7 323.5,526.5 324.0,511.0 324.6,473.1 325.2,435.6 325.7,403.3 326.3,378.7 326.9,352.9 327.4,367.3 328.0,391.8 328.6,420.5 329.1,476.8 329.7,533.3 330.3,577.2 330.8,606.6 331.4,620.0 332.0,613.6 332.5,602.0 333.1,593.4 333.6,583.5 334.2,576.4 334.8,566.1 335.3,567.8 335.9,565.6 336.5,572.9 337.0,573.3 337.6,577.9 338.2,578.2 338.7,585.7 339.3,585.1 339.9,590.5 340.4,588.6 341.0,595.7 341.5,591.7 342.1,569.6 342.7,546.8 343.2,524.4 343.8,489.5 344.4,444.4 344.9,399.0 345.5,373.5 346.1,354.9 346.6,387.1 347.2,417.3 347.8,458.1 348.3,510.7 348.9,563.5 349.5,589.5 350.0,609.5 350.6,621.8 351.1,616.2 351.7,606.1 352.3,598.5 352.8,588.7 353.4,585.0 354.0,576.0 354.5,571.2 355.1,562.8 355.7,557.7 356.2,549.1 356.8,547.1 357.4,545.6 357.9,553.4 358.5,551.6 359.0,556.8 359.6,556.4 360.2,562.2 360.7,561.8 361.3,568.7 361.9,565.9 362.4,569.1 363.0,565.1 363.6,572.1 364.1,568.3 364.7,572.1 365.3,567.5 365.8,573.2 366.4,566.4 367.0,562.1 367.5,552.9 368.1,548.4 368.6,540.8 369.2,525.1 369.8,506.9 370.3,489.5 370.9,474.6 371.5,461.8 372.0,446.4 372.6,458.1 373.2,464.6 373.7,475.2 374.3,479.9 374.9,487.2 375.4,490.0 376.0,497.1 376.6,499.2 377.1,497.3 377.7,488.1 378.2,484.5 378.8,475.4 379.4,471.8 379.9,464.5 380.5,461.7 381.1,454.0 381.6,456.5 382.2,462.3 382.8,472.3 383.3,478.6 383.9,488.4 384.5,491.6 385.0,498.7 385.6,501.0 386.1,508.5 386.7,508.9 387.3,510.3 387.8,503.3 388.4,499.8 389.0,491.4 389.5,487.9 390.1,495.3 390.7,505.9 391.2,511.3 391.8,512.1 392.4,496.4 392.9,482.6 393.5,467.0 394.1,453.4 394.6,440.0 395.2,427.9 395.7,414.7 396.3,403.1 396.9,395.2 397.4,407.8 398.0,416.0 398.6,427.3 399.1,435.7 399.7,444.7 400.3,450.6 400.8,459.1 401.4,468.8 402.0,481.7 402.5,492.7 403.1,505.7 403.6,516.4 404.2,528.8 404.8,539.5 405.3,551.9 405.9,545.1 406.5,535.0 407.0,522.6 407.6,514.9 408.2,505.4 408.7,499.1 409.3,493.5 409.9,494.2 410.4,487.5 411.0,488.5 411.6,481.3 412.1,480.8 412.7,472.2 413.2,473.4 413.8,470.3 414.4,477.4 414.9,479.7 415.5,486.9 416.1,487.2 416.6,495.1 417.2,493.1 417.8,499.9 418.3,497.2 418.9,503.9 419.5,504.0 420.0,511.8 420.6,512.8 421.1,519.7 421.7,521.3 422.3,527.9 422.8,528.3 423.4,515.4 424.0,493.4 424.5,471.9 425.1,449.0 425.7,421.9 426.2,394.2 426.8,367.2 427.4,370.3 427.9,392.6 428.5,414.0 429.1,436.0 429.6,455.4 430.2,475.5 430.7,494.6 431.3,510.0 431.9,519.2 432.4,531.1 433.0,537.9 433.6,545.9 434.1,550.1 434.7,557.9 435.3,560.2 435.8,568.2 436.4,570.5 437.0,578.6 437.5,582.0 438.1,589.3 438.6,581.0 439.2,577.4 439.8,570.0 440.3,567.4 440.9,560.7 441.5,562.4 442.0,554.6 442.6,556.6 443.2,550.5 443.7,557.1 444.3,554.6 444.9,559.6 445.4,556.1 446.0,559.4 446.6,556.4 447.1,563.7 447.7,563.3 448.2,570.2 448.8,568.2 449.4,576.1 449.9,573.5 450.5,580.8 451.1,579.7 451.6,585.1 452.2,585.5 452.8,590.9 453.3,589.9 453.9,597.2 454.5,595.5 455.0,602.4 455.6,600.1 456.2,608.6 456.7,604.1 457.3,598.7 457.8,589.5 458.4,585.0 459.0,576.7 459.5,571.3 460.1,563.1 460.7,557.8 461.2,548.2 461.8,543.8 462.4,534.5 462.9,529.2 463.5,519.1 464.1,514.1 464.6,502.9 465.2,511.4 465.7,515.1 466.3,523.2 466.9,526.4 467.4,534.4 468.0,537.0 468.6,544.4 469.1,546.4 469.7,549.9 470.3,540.2 470.8,535.8 471.4,526.8 472.0,521.6 472.5,512.3 473.1,508.3 473.7,497.7 474.2,501.0 474.8,507.8 475.3,518.0 475.9,525.1 476.5,534.9 477.0,540.8 477.6,550.1 478.2,556.8 478.7,561.8 479.3,554.5 479.9,552.0 480.4,543.6 481.0,541.1 481.6,533.8 482.1,531.9 482.7,525.2 483.2,528.6 483.8,527.2 484.4,533.5 484.9,533.8 485.5,539.9 486.1,536.5 486.6,529.4 487.2,518.0 487.8,508.8 488.3,499.2 488.9,493.3 489.5,483.3 490.0,479.8 490.6,482.0 491.2,489.5 491.7,491.9 492.3,500.9 492.8,500.5 493.4,507.6 494.0,510.1 494.5,516.7 495.1,523.6 495.7,534.2 496.2,541.9 496.8,552.1 497.4,558.2 497.9,567.3 498.5,572.1 499.1,583.0 499.6,573.9 500.2,572.8 500.7,565.9 501.3,563.5 501.9,556.8 502.4,554.9 503.0,547.0 503.6,554.3 504.1,555.7 504.7,562.8 505.3,565.3 505.8,573.9 506.4,575.0 507.0,582.3 507.5,583.5 508.1,592.1 508.7,593.3 509.2,594.1 509.8,585.3 510.3,587.3 510.9,580.6 511.5,581.1 512.0,574.4 512.6,574.7 513.2,568.3 513.7,570.0 514.3,563.2 514.9,566.8 515.4,562.5 516.0,569.4 516.6,567.0 517.1,573.8 517.7,570.8 518.3,571.4 518.8,563.9 519.4,561.1 519.9,552.9 520.5,550.5 521.1,542.0 521.6,540.3 522.2,533.9 522.8,533.4 523.3,526.5 523.9,526.3 524.5,525.1 525.0,531.2 525.6,531.8 526.2,537.9 526.7,537.7 527.3,545.3 527.8,547.7 528.4,554.9 529.0,550.6 529.5,550.7 530.1,544.2 530.7,543.8 531.2,536.6 531.8,536.0 532.4,528.8 532.9,527.4 533.5,520.6 534.1,522.3 534.6,515.9 535.2,517.2 535.8,509.5 536.3,510.0 536.9,507.1 537.4,516.6 538.0,521.1 538.6,529.9 539.1,535.4 539.7,544.5 540.3,551.2 540.8,563.3 541.4,555.6 542.0,549.9 542.5,539.7 543.1,534.3 543.7,526.1 544.2,522.8 544.8,513.7 545.3,517.3 545.9,517.1 546.5,524.1 547.0,525.1 547.6,531.8 548.2,529.8 548.7,537.2 549.3,525.1 549.9,517.7 550.4,508.0 551.0,499.6 551.6,491.0 552.1,485.2 552.7,473.7 553.3,483.0 553.8,485.7 554.4,493.8 554.9,495.0 555.5,501.0 556.1,500.6 556.6,508.6 557.2,509.2 557.8,515.4 558.3,515.8 558.9,522.1 559.5,521.2 560.0,530.0 560.6,531.0 561.2,537.7 561.7,537.9 562.3,543.9 562.8,540.7 563.4,546.3 564.0,545.7 564.5,550.9 565.1,547.6 565.7,547.7 566.2,540.7 566.8,540.3 567.4,534.2 567.9,534.1 568.5,528.4 569.1,526.2 569.6,514.0 570.2,504.9 570.8,493.0 571.3,486.5 571.9,477.5 572.4,473.2 573.0,468.8 573.6,479.5 574.1,483.6 574.7,491.2 575.3,496.0 575.8,503.0 576.4,503.2 577.0,511.1 577.5,511.5 578.1,518.1 578.7,517.9 579.2,515.3 579.8,505.6 580.4,499.4 580.9,489.1 581.5,483.6 582.0,475.1 582.6,471.2 583.2,471.5 583.7,479.2 584.3,482.2 584.9,490.7 585.4,484.3 586.0,483.1 586.6,477.1 587.1,477.6 587.7,470.3 588.3,475.6 588.8,484.8 589.4,497.0 589.9,507.5 590.5,517.9 591.1,525.9 591.6,536.6 592.2,542.3 592.8,549.3 593.3,547.8 593.9,553.4 594.5,551.9 595.0,559.3 595.6,559.5 596.2,565.5 596.7,566.6 597.3,572.3 597.9,574.0 598.4,582.4 599.0,585.6 599.5,592.5 600.1,593.1 600.7,600.6 601.2,600.4 601.8,605.8 602.4,605.7 602.9,611.8 603.5,602.7 604.1,596.3 604.6,585.9 605.2,579.5 605.8,569.2 606.3,563.3 606.9,554.3 607.4,549.0 608.0,539.5 608.6,535.3 609.1,527.0 609.7,523.0 610.3,515.1 610.8,508.4 611.4,497.0 612.0,487.7 612.5,437.8 613.1,384.6 613.7,327.6 614.2,270.9 614.8,261.1 615.4,263.2 615.9,317.5 616.5,391.5 617.0,481.3 617.6,559.3 618.2,586.3 618.7,613.8 619.3,622.3 619.9,623.2 620.4,616.7 621.0,616.4 621.6,609.1 622.1,605.8 622.7,598.5 623.3,596.7 623.8,589.0 624.4,587.6 624.9,582.9 625.5,583.5 626.1,578.3 626.6,579.2 627.2,572.9 627.8,573.3 628.3,568.2 628.9,568.0 629.5,554.3 630.0,539.9 630.6,524.3 631.2,508.6 631.7,488.4 632.3,468.9 632.9,448.8 633.4,434.5 634.0,420.1 634.5,411.7 635.1,423.7 635.7,438.8 636.2,452.2 636.8,464.0 637.4,471.7 637.9,481.8 638.5,489.2 639.1,495.9 639.6,496.9 640.2,504.5 640.8,504.8 641.3,510.6 641.9,511.4 642.4,518.0 643.0,517.8 643.6,525.2 644.1,522.9 644.7,517.3 645.3,507.7 645.8,502.3 646.4,494.7 647.0,491.3 647.5,483.8 648.1,483.2 648.7,484.1 649.2,492.3 649.8,494.8 650.4,504.3 650.9,507.0 651.5,514.6 652.0,516.3 652.6,525.2 653.2,520.8 653.7,513.0 654.3,501.3 654.9,492.0 655.4,482.1 656.0,475.5 656.6,466.5 657.1,459.4 657.7,449.8 658.3,442.8 658.8,433.0 659.4,425.9 660.0,415.0 660.5,406.5 661.1,395.3 661.6,394.0 662.2,404.7 662.8,418.4 663.3,430.2 663.9,445.2 664.5,459.4 665.0,475.0 665.6,485.3 666.2,497.4 666.7,508.2 667.3,519.8 667.9,526.5 668.4,537.3 669.0,542.7 669.5,540.7 670.1,533.3 670.7,529.1 671.2,520.3 671.8,517.1 672.4,509.1 672.9,505.6 673.5,498.1 674.1,495.5 674.6,488.0 675.2,487.4 675.8,479.9 676.3,480.5 676.9,472.2 677.5,474.4 678.0,468.0 678.6,470.3 679.1,464.1 679.7,466.6 680.3,464.6 680.8,473.9 681.4,478.0 682.0,486.2 682.5,490.3 683.1,499.1 683.7,503.7 684.2,510.4 684.8,510.1 685.4,517.6 685.9,514.8 686.5,522.4 687.0,521.3 687.6,530.0 688.2,522.7 688.7,513.4 689.3,501.1 689.9,491.1 690.4,479.1 691.0,470.1 691.6,466.1 692.1,470.6 692.7,462.3 693.3,463.8 693.8,459.9 694.4,452.2 695.0,438.1 695.5,425.7 696.1,411.5 696.6,397.8 697.2,381.2 697.8,383.9 698.3,399.6 698.9,416.6 699.5,433.0 700.0,452.9 700.6,472.6 701.2,489.5 701.7,494.8 702.3,504.7 702.9,510.3 703.4,519.3 704.0,525.9 704.5,536.0 705.1,529.9 705.7,531.8 706.2,525.9 706.8,529.0 707.4,522.7 707.9,524.7 708.5,517.6 709.1,518.8 709.6,513.8 710.2,517.6 710.8,511.4 711.3,515.4 711.9,510.1 712.5,505.8 713.0,497.0 713.6,493.2 714.1,484.5 714.7,479.3 715.3,471.2 715.8,466.1 716.4,457.2 717.0,455.0 717.5,448.1 718.1,444.1 718.7,435.6 719.2,444.9 719.8,450.0 720.4,459.5 720.9,465.5 721.5,474.5 722.1,479.9 722.6,487.7 723.2,491.4 723.7,499.2 724.3,502.9 724.9,512.1 725.4,502.2 726.0,493.6 726.6,482.4 727.1,473.4 727.7,461.9 728.3,463.7 728.8,471.2 729.4,482.2 730.0,490.5 730.5,502.0 731.1,495.8 731.6,488.2 732.2,477.1 732.8,468.7 733.3,457.4 733.9,448.3 734.5,436.2 735.0,438.9 735.6,445.7 736.2,455.7 736.7,459.7 737.3,468.8 737.9,471.8 738.4,479.8 739.0,486.6 739.6,498.0 740.1,506.5 740.7,518.5 741.2,528.4 741.8,541.8 742.4,540.3 742.9,539.8 743.5,531.6 744.1,531.3 744.6,523.6 745.2,523.1 745.8,516.0 746.3,513.9 746.9,506.7 747.5,501.0 748.0,491.2 748.6,485.0 749.1,476.3 749.7,472.8 750.3,465.3 750.8,463.0 751.4,455.4 752.0,463.3 752.5,470.9 753.1,480.5 753.7,487.6 754.2,496.6 754.8,502.7 755.4,511.7 755.9,517.9 756.5,527.9 757.1,523.2 757.6,513.3 758.2,500.7 758.7,490.0 759.3,478.4 759.9,470.2 760.4,459.0 761.0,450.2 761.6,453.3 762.1,461.0 762.7,462.7 763.3,469.4 763.8,470.8 764.4,466.9 765.0,454.6 765.5,444.0 766.1,431.1 766.6,415.4 767.2,398.6 767.8,411.5 768.3,428.5 768.9,446.5 769.5,460.9 770.0,476.0 770.6,489.8 771.2,505.6 771.7,519.8 772.3,534.8 772.9,548.0 773.4,563.0 774.0,568.2 774.6,576.6 775.1,580.5 775.7,587.8 776.2,585.7 776.8,592.2 777.4,590.7 777.9,593.5 778.5,589.8 779.1,595.3 779.6,591.7 780.2,598.3 780.8,596.3 781.3,598.1 781.9,591.2 782.5,590.7 783.0,583.7 783.6,585.4 784.2,580.4 784.7,583.0 785.3,578.7 785.8,584.4 786.4,580.7 787.0,588.5 787.5,585.2 788.1,592.5 788.7,588.2 789.2,588.9 789.8,584.1 790.4,584.7 790.9,580.8 791.5,584.4 792.1,577.3 792.6,578.3 793.2,574.2 793.7,580.6 794.3,577.6 794.9,582.7 795.4,578.4 796.0,582.8 796.6,580.4 797.1,574.3 797.7,564.9 798.3,557.9 798.8,548.5 799.4,543.5 800.0,534.1 800.5,543.5 801.1,547.4 801.7,556.0 802.2,559.6 802.8,567.9 803.3,553.8 803.9,545.2 804.5,533.8 805.0,530.0 805.6,521.4 806.2,519.9 806.7,516.8 807.3,521.4 807.9,520.8 808.4,526.7 809.0,524.8 809.6,531.5 810.1,531.1 810.7,537.8 811.2,538.2 811.8,537.9 812.4,529.1 812.9,526.2 813.5,516.9 814.1,517.1 814.6,517.6 815.2,525.4 815.8,525.5 816.3,532.4 816.9,532.7 817.5,538.6 818.0,537.6 818.6,542.8 819.2,542.2 819.7,547.9 820.3,539.9 820.8,539.0 821.4,530.3 822.0,528.6 822.5,526.5 823.1,534.0 823.7,535.0 824.2,543.3 824.8,544.6 825.4,548.2 825.9,539.4 826.5,538.9 827.1,531.8 827.6,533.1 828.2,528.1 828.7,530.3 829.3,524.8 829.9,530.5 830.4,527.5 831.0,533.8 831.6,531.3 832.1,537.2 832.7,532.1 833.3,538.3 833.8,534.5 834.4,541.8 835.0,537.4 835.5,543.7 836.1,536.6 836.7,537.8 837.2,531.9 837.8,531.5 838.3,525.4 838.9,523.9 839.5,515.0 840.0,509.6 840.6,501.8 841.2,496.7 841.7,488.5 842.3,484.9 842.9,478.2 843.4,489.4 844.0,494.8 844.6,504.3 845.1,506.3 845.7,513.3 846.2,516.3 846.8,522.0 847.4,514.9 847.9,515.2 848.5,507.6 849.1,507.1 849.6,498.8 850.2,497.9 850.8,493.0 851.3,491.7 851.9,485.4 852.5,492.2 853.0,492.2 853.6,500.7 854.2,501.8 854.7,509.8 855.3,509.9 855.8,516.4 856.4,516.4 857.0,523.7 857.5,516.8 858.1,515.8 858.7,508.2 859.2,506.9 859.8,501.8 860.4,496.4 860.9,484.3 861.5,474.4 862.1,451.5 862.6,429.2 863.2,408.0 863.8,391.5 864.3,393.2 864.9,412.9 865.4,431.4 866.0,447.5 866.6,462.2 867.1,477.6 867.7,491.2 868.3,505.3 868.8,517.9 869.4,532.1 870.0,542.0 870.5,553.5 871.1,556.7 871.7,552.4 872.2,544.0 872.8,538.2 873.3,528.7 873.9,524.2 874.5,516.4 875.0,510.3 875.6,501.3 876.2,494.9 876.7,485.5 877.3,483.2 877.9,475.4 878.4,473.2 879.0,469.3 879.6,476.3 880.1,477.0 880.7,483.9 881.3,481.9 881.8,488.7 882.4,489.6 882.9,497.3 883.5,498.0 884.1,506.0 884.6,507.2 885.2,515.5 885.8,516.6 886.3,524.7 886.9,525.6 887.5,533.2 888.0,534.4 888.6,539.7 889.2,524.9 889.7,512.2 890.3,498.4 890.8,485.6 891.4,470.8 892.0,457.5 892.5,442.9 893.1,432.9 893.7,425.3 894.2,437.2 894.8,446.1 895.4,457.6 895.9,468.5 896.5,482.1 897.1,493.8 897.6,506.2 898.2,513.1 898.8,522.5 899.3,529.3 899.9,533.2 900.4,526.1 901.0,527.0 901.6,519.1 902.1,520.6 902.7,513.9 903.3,513.1 903.8,507.3 904.4,507.0 905.0,498.4 905.5,496.8 906.1,489.9 906.7,486.1 907.2,480.4 907.8,478.0 908.3,470.0 908.9,469.6 909.5,461.5 910.0,460.0 910.6,451.6 911.2,460.4 911.7,465.6 912.3,474.3 912.9,479.7 913.4,488.9 914.0,493.8 914.6,502.0 915.1,506.7 915.7,516.5 916.3,510.5 916.8,494.8 917.4,477.3 917.9,450.3 918.5,420.1 919.1,390.6 919.6,363.9 920.2,357.5 920.8,371.0 921.3,389.0 921.9,420.5 922.5,458.2 923.0,495.0 923.6,519.8 924.2,544.1 924.7,569.1 925.3,582.3 925.9,590.0 926.4,590.5 927.0,599.9 927.5,593.1 928.1,594.7 928.7,588.1 929.2,589.1 929.8,583.1 930.4,587.1 930.9,586.0 931.5,591.3 932.1,591.6 932.6,598.7 933.2,597.2 933.8,604.4 934.3,602.2 934.9,608.5 935.4,606.8 936.0,611.0 936.6,606.5 937.1,607.8 937.7,601.3 938.3,604.8 938.8,600.0 939.4,604.1 940.0,597.1 940.5,600.9 941.1,595.2 941.7,587.6 942.2,577.0 942.8,567.6 943.4,554.4 943.9,543.4 944.5,533.4 945.0,526.5 945.6,516.3 946.2,509.7 946.7,499.9 947.3,494.6 947.9,485.3 948.4,481.8 949.0,492.3 949.6,505.4 950.1,515.7 950.7,526.6 951.3,535.5 951.8,546.7 952.4,547.0 952.9,549.0 953.5,542.0 954.1,541.6 954.6,535.7 955.2,535.5 955.8,530.5 956.3,534.3 956.9,527.4 957.5,530.9 958.0,526.2 958.6,529.6 959.2,525.8 959.7,531.8 960.3,527.7 960.9,532.3 961.4,530.1 962.0,536.8 962.5,534.5 963.1,541.0 963.7,538.2 964.2,544.5 964.8,536.4 965.4,541.3 965.9,537.2 966.5,541.0 967.1,535.8 967.6,541.1 968.2,536.2 968.8,541.8 969.3,536.0 969.9,539.8 970.4,537.6 971.0,542.6 971.6,540.5 972.1,545.7 972.7,544.4 973.3,550.1 973.8,549.4 974.4,558.3 975.0,564.8 975.5,575.5 976.1,597.8 976.7,626.8 977.2,671.9 977.8,701.4 978.4,715.3 978.9,719.5 979.5,719.6 980.0,720.1 980.6,718.9 981.2,718.6 981.7,718.4 982.3,720.5 982.9,727.0 983.4,727.0 984.0,727.0 984.6,727.0 985.1,727.0 985.7,727.0 986.3,727.0 986.8,727.0 987.4,727.0 988.0,727.0 988.5,721.3 989.1,720.4 989.6,719.1 990.2,718.3 990.8,718.7 991.3,720.8 991.9,727.0 992.5,727.0 993.0,727.0 993.6,727.0 994.2,727.0 994.7,727.0 995.3,727.0 995.9,727.0 996.4,727.0 997.0,727.0 997.5,727.0 998.1,727.0 998.7,727.0 999.2,727.0 999.8,727.0 1000.4,727.0 1000.9,727.0 1001.5,727.0 1002.1,727.0 1002.6,727.0 1003.2,727.0 1003.8,727.0 1004.3,727.0 1004.9,727.0 1005.5,727.0 1006.0,727.0 1006.6,727.0 1007.1,727.0 1007.7,727.0 1008.3,727.0 1008.8,727.0 1009.4,727.0 1010.0,727.0 1010.5,727.0 1011.1,727.0 1011.7,727.0 1012.2,727.0 1012.8,727.0 1013.4,727.0 1013.9,727.0 1014.5,727.0 1015.0,727.0 1015.6,727.0 1016.2,727.0 1016.7,727.0 1017.3,727.0 1017.9,727.0 1018.4,727.0 1019.0,727.0"/></g>
<polyline stroke="#22ec22" points="0.0,637.7 1.5,637.7 3.0,637.7 4.5,637.7 6.0,637.7 7.5,637.7 9.0,637.7 10.5,637.7 12.0,637.7 13.5,637.7 15.0,637.7 16.5,637.7 18.0,637.7 19.5,637.7 21.0,637.7 22.5,637.7 24.0,637.7 25.5,637.7 27.0,637.7 28.5,637.7 30.0,637.7 31.5,637.7 33.0,637.7 34.5,637.7 36.0,637.7 37.5,637.7 39.0,637.7 40.5,637.7 42.0,637.7 43.5,637.7 45.0,637.7 46.5,637.7 48.0,637.7 49.5,637.7 51.0,637.7 52.5,637.7 54.0,637.7 55.5,637.7 57.0,637.7 58.5,637.7 60.0,637.7 61.5,637.7 63.0,637.7 64.5,637.7 66.0,637.7 67.5,637.7 69.0,637.7 70.5,637.7 72.0,637.7 73.5,637.9 75.0,638.3 76.5,638.8 78.0,639.1 79.5,640.2 81.0,640.8 82.5,643.4 84.0,645.1 85.5,645.9 87.0,643.9 88.5,641.9 90.0,641.9 91.5,641.9 93.0,641.6 94.5,641.3 96.0,641.2 97.5,641.9 99.0,641.8 100.5,641.6 102.0,641.8 103.5,641.4 105.0,642.2 106.5,641.6 108.0,641.7 109.5,642.8 111.0,641.9 112.5,642.8 114.0,642.6 115.5,642.3 117.0,642.8 118.5,642.9 120.0,643.5 121.5,643.6 123.0,643.0 124.5,642.9 126.0,643.2 127.5,642.6 129.0,643.2 130.5,642.7 132.0,643.0 133.5,643.7 135.0,643.7 136.5,643.4 138.0,644.1 139.5,643.0 141.0,643.2 142.5,643.7 144.0,643.5 145.5,643.8 147.0,643.1 148.5,644.0 150.0,643.3 151.5,643.5 153.0,643.4 154.5,644.1 156.0,643.2 157.5,644.5 159.0,643.7 160.5,643.5 162.0,643.7 163.5,643.9 165.0,643.6 166.5,644.3 168.0,644.3 169.5,644.2 171.0,644.6 172.5,644.3 174.0,643.5 175.5,643.7 177.0,644.0 178.5,643.8 180.0,643.9 181.5,644.1 183.0,644.5 184.5,644.2 186.0,644.6 187.5,644.3 189.0,643.5 190.5,644.9 192.0,643.7 193.5,644.1 195.0,643.6 196.5,644.3 198.0,644.5 199.5,644.0 201.0,644.9 202.5,643.8 204.0,644.9 205.5,644.7 207.0,643.8 208.5,643.8 210.0,643.7 211.5,644.5 213.0,644.0 214.5,645.0 216.0,643.8 217.5,644.8 219.0,644.2 220.5,643.7 222.0,644.8 223.5,644.6 225.0,644.1 226.5,644.2 228.0,644.0 229.5,644.0 231.0,644.6 232.5,644.5 234.0,644.1 235.5,644.2 237.0,645.2 238.5,644.3 240.0,644.5 241.5,644.1 243.0,643.9 244.5,644.7 246.0,644.2 247.5,644.9 249.0,644.2 250.5,644.4 252.0,644.8 253.5,644.9 255.0,644.4 256.5,644.9 258.0,644.7 259.5,645.1 261.0,645.0 262.5,645.1 264.0,644.3 265.5,644.1 267.0,644.0 268.5,644.4 270.0,644.5 271.5,644.3 273.0,644.2 274.5,644.6 276.0,644.4 277.5,644.0 279.0,645.2 280.5,644.7 282.0,644.2 283.5,644.5 285.0,644.8 286.5,644.2 288.0,644.7 289.5,645.1 291.0,644.3 292.5,644.7 294.0,645.3 295.5,645.0 297.0,644.7 298.5,644.1 300.0,645.4 301.5,645.4 303.0,645.2 304.5,644.4 306.0,644.9 307.5,645.2 309.0,644.8 310.5,645.5 312.0,644.9 313.5,644.1 315.0,644.6 316.5,645.6 318.0,645.6 319.5,645.5 321.0,644.5 322.5,644.6 324.0,645.1 325.5,646.3 327.0,649.5 328.5,647.0 330.0,645.3 331.5,645.2 333.0,644.8 334.5,645.6 336.0,644.6 337.5,645.0 339.0,644.9 340.5,645.3 342.0,645.3 343.5,646.7 345.0,648.3 346.5,647.4 348.0,645.5 349.5,644.9 351.0,644.4 352.5,644.9 354.0,645.9 355.5,645.5 357.0,645.2 358.5,646.0 360.0,646.2 361.5,645.9 363.0,645.3 364.5,646.2 366.0,646.1 367.5,646.0 369.0,645.8 370.5,645.6 372.0,645.7 373.5,646.1 375.0,646.2 376.5,646.2 378.0,646.7 379.5,646.0 381.0,645.9 382.5,646.1 384.0,646.8 385.5,646.0 387.0,646.5 388.5,646.4 390.0,646.2 391.5,647.6 393.0,647.2 394.5,648.6 396.0,648.6 397.5,649.5 399.0,647.7 400.5,647.4 402.0,646.6 403.5,647.3 405.0,646.6 406.5,647.1 408.0,646.6 409.5,646.4 411.0,647.5 412.5,647.4 414.0,647.4 415.5,647.7 417.0,647.5 418.5,646.4 420.0,646.7 421.5,646.9 423.0,647.6 424.5,646.8 426.0,649.2 427.5,649.7 429.0,649.0 430.5,647.9 432.0,646.9 433.5,647.6 435.0,647.5 436.5,646.7 438.0,647.7 439.5,646.4 441.0,646.4 442.5,647.0 444.0,646.8 445.5,647.5 447.0,646.3 448.5,647.5 450.0,646.7 451.5,647.4 453.0,646.3 454.5,647.6 456.0,647.5 457.5,647.1 459.0,647.5 460.5,647.5 462.0,647.5 463.5,647.3 465.0,647.7 466.5,647.2 468.0,647.3 469.5,647.0 471.0,647.7 472.5,646.4 474.0,647.4 475.5,646.7 477.0,647.3 478.5,646.6 480.0,646.9 481.5,647.4 483.0,647.0 484.5,647.3 486.0,647.3 487.5,646.6 489.0,647.4 490.5,646.8 492.0,647.0 493.5,647.2 495.0,647.0 496.5,646.8 498.0,646.7 499.5,647.3 501.0,647.5 502.5,646.7 504.0,647.3 505.5,646.7 507.0,647.4 508.5,646.9 510.0,647.0 511.5,647.4 513.0,647.2 514.5,647.1 516.0,647.0 517.5,647.7 519.0,647.0 520.5,647.5 522.0,646.7 523.5,647.9 525.0,648.0 526.5,646.9 528.0,647.2 529.5,646.8 531.0,647.2 532.5,647.9 534.0,647.5 535.5,646.9 537.0,648.0 538.5,647.5 540.0,646.8 541.5,647.2 543.0,646.9 544.5,648.0 546.0,647.3 547.5,647.5 549.0,648.0 550.5,647.6 552.0,646.9 553.5,646.9 555.0,647.1 556.5,647.8 558.0,647.7 559.5,647.4 561.0,647.4 562.5,647.0 564.0,647.0 565.5,647.9 567.0,648.1 568.5,647.7 570.0,648.0 571.5,647.7 573.0,647.1 574.5,647.1 576.0,648.2 577.5,648.3 579.0,648.5 580.5,647.6 582.0,648.2 583.5,648.2 585.0,648.1 586.5,648.4 588.0,648.6 589.5,647.6 591.0,648.3 592.5,647.9 594.0,648.4 595.5,648.5 597.0,648.5 598.5,648.1 600.0,648.3 601.5,647.1 603.0,647.1 604.5,647.5 606.0,647.8 607.5,648.0 609.0,648.2 610.5,647.4 612.0,649.4 613.5,650.9 615.0,651.0 616.5,649.4 618.0,647.9 619.5,647.1 621.0,648.3 622.5,647.4 624.0,647.3 625.5,647.8 627.0,648.5 628.5,648.6 630.0,648.9 631.5,648.0 633.0,648.1 634.5,648.1 636.0,648.2 637.5,648.5 639.0,649.3 640.5,648.9 642.0,648.5 643.5,649.4 645.0,648.8 646.5,648.1 648.0,648.2 649.5,648.9 651.0,648.5 652.5,648.6 654.0,648.8 655.5,649.1 657.0,649.6 658.5,649.0 660.0,650.8 661.5,650.7 663.0,650.3 664.5,649.7 666.0,649.2 667.5,648.9 669.0,648.9 670.5,649.5 672.0,648.8 673.5,648.6 675.0,649.6 676.5,649.4 678.0,648.3 679.5,649.1 681.0,649.2 682.5,648.5 684.0,648.8 685.5,648.6 687.0,648.4 688.5,649.0 690.0,648.4 691.5,648.9 693.0,649.3 694.5,650.0 696.0,650.8 697.5,650.2 699.0,650.2 700.5,650.4 702.0,649.6 703.5,648.7 705.0,648.6 706.5,648.6 708.0,649.6 709.5,648.8 711.0,649.1 712.5,649.1 714.0,649.4 715.5,649.0 717.0,648.8 718.5,649.3 720.0,648.8 721.5,648.4 723.0,649.7 724.5,649.6 726.0,648.9 727.5,649.3 729.0,649.4 730.5,648.8 732.0,648.6 733.5,648.5 735.0,649.5 736.5,649.7 738.0,648.9 739.5,649.7 741.0,649.0 742.5,648.9 744.0,648.7 745.5,649.1 747.0,648.8 748.5,649.5 750.0,649.6 751.5,649.3 753.0,648.9 754.5,648.8 756.0,649.7 757.5,649.3 759.0,649.2 760.5,648.3 762.0,649.7 763.5,648.8 765.0,649.0 766.5,648.5 768.0,649.7 769.5,649.5 771.0,648.9 772.5,649.4 774.0,649.7 775.5,649.5 777.0,648.4 778.5,648.4 780.0,648.7 781.5,648.9 783.0,648.6 784.5,648.5 786.0,648.6 787.5,649.6 789.0,649.3 790.5,648.4 792.0,648.8 793.5,649.4 795.0,648.6 796.5,648.9 798.0,648.6 799.5,649.5 801.0,648.9 802.5,648.6 804.0,649.2 805.5,648.5 807.0,648.5 808.5,649.4 810.0,649.4 811.5,648.3 813.0,648.2 814.5,649.3 816.0,648.7 817.5,649.2 819.0,648.6 820.5,648.2 822.0,648.3 823.5,648.8 825.0,649.2 826.5,649.4 828.0,648.6 829.5,648.8 831.0,649.2 832.5,649.2 834.0,649.3 835.5,649.2 837.0,648.9 838.5,649.3 840.0,648.8 841.5,649.3 843.0,648.9 844.5,648.4 846.0,649.4 847.5,648.5 849.0,649.0 850.5,649.3 852.0,649.1 853.5,649.1 855.0,649.6 856.5,648.7 858.0,649.0 859.5,649.3 861.0,649.7 862.5,649.8 864.0,650.6 865.5,652.1 867.0,650.7 868.5,649.3 870.0,649.6 871.5,649.7 873.0,648.8 874.5,648.9 876.0,649.1 877.5,648.8 879.0,648.9 880.5,648.6 882.0,649.5 883.5,648.9 885.0,649.6 886.5,649.4 888.0,649.0 889.5,648.6 891.0,648.9 892.5,650.3 894.0,651.9 895.5,650.6 897.0,650.0 898.5,648.4 900.0,649.4 901.5,649.7 903.0,648.3 904.5,648.5 906.0,649.5 907.5,648.8 909.0,648.8 910.5,649.5 912.0,649.5 913.5,649.7 915.0,648.7 916.5,650.0 918.0,650.1 919.5,651.6 921.0,652.0 922.5,650.4 924.0,649.7 925.5,649.2 927.0,648.3 928.5,648.6 930.0,648.7 931.5,649.4 933.0,649.0 934.5,648.9 936.0,648.3 937.5,649.1 939.0,648.2 940.5,648.9 942.0,648.2 943.5,649.6 945.0,648.9 946.5,649.5 948.0,651.1 949.5,649.5 951.0,649.5 952.5,648.8 954.0,649.1 955.5,649.2 957.0,649.0 958.5,649.0 960.0,649.3 961.5,648.6 963.0,649.3 964.5,648.3 966.0,649.4 967.5,648.9 969.0,649.3 970.5,648.5 972.0,649.6 973.5,649.3 975.0,648.2 976.5,647.3 978.0,646.8 979.5,646.4 981.0,646.4 982.5,646.4 984.0,646.4 985.5,646.4 987.0,646.4 988.5,646.4 990.0,646.4 991.5,646.4 993.0,646.4 994.5,646.4 996.0,646.4 997.5,646.4 999.0,646.4 1000.5,646.4 1002.0,646.4 1003.5,646.4 1005.0,646.4 1006.5,646.4 1008.0,646.4 1009.5,646.4 1011.0,646.4 1012.5,646.4 1014.0,646.4 1015.5,646.4 1017.0,646.4 1018.5,646.4"/>
<line x1="0" y1="723.5" x2="1019" y2="723.5" stroke="#f47ff4"/>
</g>
</svg>
<div class="yl" style="top:803px">0</div>
<div class="yl" style="top:768px">5</div>
<div class="yl" style="top:734px">10</div>
<div class="yl" style="top:699px">15</div>
<div class="yl" style="top:665px">20</div>
<div class="yl" style="top:630px">25</div>
<div class="yl" style="top:596px">30</div>
<div class="yl" style="top:561px">35</div>
<div class="yl" style="top:527px">40</div>
<div class="yl" style="top:492px">45</div>
<div class="yl" style="top:458px">50</div>
<div class="yl" style="top:424px">55</div>
<div class="yl" style="top:389px">60</div>
<div class="yl" style="top:355px">65</div>
<div class="yl" style="top:320px">70</div>
<div class="yl" style="top:286px">75</div>
<div class="yl" style="top:251px">80</div>
<div class="yl" style="top:217px">85</div>
<div class="yl" style="top:182px">90</div>
<div class="yl" style="top:148px">95</div>
<div class="yl" style="top:113px">100</div>

<div id="sb" style="left:248px;top:832px;width:1019px;height:23px;background:#fff"></div>
<div class="btn" style="left:246px;top:832px;width:16px;height:23px"><svg width="14" height="22" style="position:absolute;left:0;top:0"><path d="M8 7v7l-4-3.5z" fill="#000"/></svg></div>
<div class="btn" style="left:1251px;top:832px;width:16px;height:23px"><svg width="14" height="22" style="position:absolute;left:0;top:0"><path d="M5 7v7l4-3.5z" fill="#000"/></svg></div>
<div class="btn" style="left:593px;top:832px;width:210px;height:23px"></div>

<div style="left:200.5px;top:859px;font-size:12px;line-height:14px">Time</div>
<div style="left:187px;top:887px;font-size:12px;line-height:14px">Charge</div>
<div style="left:194px;top:907px;font-size:12px;line-height:14px">(mAh)</div>
<div class="xl" style="left:244.6px;top:859px">1:43</div><div class="xl" style="left:244.6px;top:887px">73</div>
<div class="xl" style="left:295.8px;top:859px">2:01</div><div class="xl" style="left:295.8px;top:887px">73</div>
<div class="xl" style="left:346.9px;top:859px">2:19</div><div class="xl" style="left:346.9px;top:887px">136</div>
<div class="xl" style="left:398.0px;top:859px">2:37</div><div class="xl" style="left:398.0px;top:887px">265</div>
<div class="xl" style="left:449.2px;top:859px">2:55</div><div class="xl" style="left:449.2px;top:887px">394</div>
<div class="xl" style="left:500.4px;top:859px">3:14</div><div class="xl" style="left:500.4px;top:887px">549</div>
<div class="xl" style="left:551.5px;top:859px">3:32</div><div class="xl" style="left:551.5px;top:887px">697</div>
<div class="xl" style="left:602.6px;top:859px">3:50</div><div class="xl" style="left:602.6px;top:887px">818</div>
<div class="xl" style="left:653.8px;top:859px">4:08</div><div class="xl" style="left:653.8px;top:887px">977</div>
<div class="xl" style="left:704.9px;top:859px">4:26</div><div class="xl" style="left:704.9px;top:887px">1118</div>
<div class="xl" style="left:756.1px;top:859px">4:44</div><div class="xl" style="left:756.1px;top:887px">1252</div>
<div class="xl" style="left:807.2px;top:859px">5:02</div><div class="xl" style="left:807.2px;top:887px">1388</div>
<div class="xl" style="left:858.4px;top:859px">5:20</div><div class="xl" style="left:858.4px;top:887px">1526</div>
<div class="xl" style="left:909.5px;top:859px">5:38</div><div class="xl" style="left:909.5px;top:887px">1687</div>
<div class="xl" style="left:960.7px;top:859px">5:56</div><div class="xl" style="left:960.7px;top:887px">1856</div>
<div class="xl" style="left:1011.9px;top:859px">6:14</div><div class="xl" style="left:1011.9px;top:887px">2028</div>
<div class="xl" style="left:1063.0px;top:859px">6:32</div><div class="xl" style="left:1063.0px;top:887px">2157</div>
<div class="xl" style="left:1114.1px;top:859px">6:50</div><div class="xl" style="left:1114.1px;top:887px">2310</div>
<div class="xl" style="left:1165.3px;top:859px">7:08</div><div class="xl" style="left:1165.3px;top:887px">2471</div>
<div class="xl" style="left:1216.5px;top:859px">7:26</div><div class="xl" style="left:1216.5px;top:887px">2603</div>

<a class="lk" style="left:354px;top:936px">www.bnbproducts.com</a>
<a class="lk" style="left:659px;top:936px">support@bnbproducts.com</a>
<div style="left:954px;top:937px;font-size:12px;line-height:14px">Copyright © 2005 - 2006, BNB Products</div>
</body></html>
